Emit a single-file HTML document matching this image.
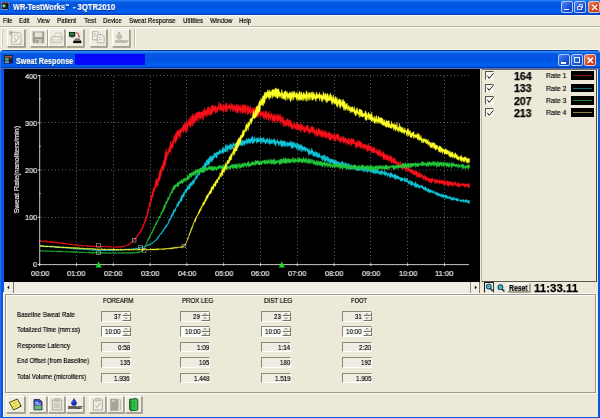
<!DOCTYPE html>
<html><head><meta charset="utf-8"><title>WR-TestWorks</title><style>
html,body{margin:0;padding:0;overflow:hidden}
body{width:600px;height:418px;overflow:hidden;position:relative;background:#ece9d8;font-family:"Liberation Sans",sans-serif;}
div,span,svg{position:absolute;box-sizing:border-box}
.t{white-space:nowrap;line-height:12px;height:12px;transform-origin:0 50%;will-change:transform;-webkit-text-stroke:0.18px currentColor;}
.titlebar{left:0;top:0;width:600px;height:15px;background:linear-gradient(#2c8aff 0%,#1470f0 8%,#0458e2 18%,#0055e0 50%,#0060f2 70%,#0058e8 86%,#0040c0 95%,#1646ac 100%);}
.btn{background:#efede1;border:1px solid;border-color:#fff #a4a191 #a4a191 #fff;box-shadow:0.7px 0.7px 0 #8f8d7e;}
.sunk{border:1px solid;border-color:#8a8878 #fff #fff #8a8878;background:#ece9d8}
.wb{border:0.9px solid #b4c8f6;border-radius:2px;background:linear-gradient(135deg,#4d8af0,#1c52d4 60%,#1746c0);}
.wbx{border:0.9px solid #e4c4bc;border-radius:2px;background:linear-gradient(135deg,#ea8a66,#d8431c 55%,#b83412);}
</style></head>
<body>
<div class="titlebar"></div>
<svg width="9" height="9" viewBox="0 0 9 9" style="left:1.1px;top:2.2px"><rect x="0.3" y="0.3" width="7.6" height="7" fill="#17120e" stroke="#a4b8ea" stroke-width="0.6"/><rect x="0.9" y="0.8" width="6.4" height="1.2" fill="#4e1a10"/><ellipse cx="3" cy="4" rx="1.8" ry="1.7" fill="#56b070"/><circle cx="2.8" cy="3.4" r="0.7" fill="#dcf4dc"/><path d="M5.8,5.2 L8.2,8" stroke="#0a1c9a" stroke-width="1"/></svg>
<div class="wb" style="left:561px;top:0.5px;width:12px;height:12px"><div style="left:2.4px;top:7.4px;width:4.4px;height:1.5px;background:#fff"></div></div>
<div class="wb" style="left:574px;top:0.5px;width:12px;height:12px"><div style="left:4px;top:2.4px;width:4.4px;height:3.8px;border:0.8px solid #c6d6fa;border-top-width:1.3px"></div><div style="left:2.4px;top:4.4px;width:4.4px;height:3.8px;border:0.8px solid #c6d6fa;border-top-width:1.3px;background:#2a5cd6"></div></div>
<div class="wbx" style="left:587.8px;top:0.5px;width:12.2px;height:12px"><svg width="12" height="11" style="left:0;top:0"><path d="M3,2.6 L8.4,8 M8.4,2.6 L3,8" stroke="#fff" stroke-width="1.3"/></svg></div>
<div style="left:0.0px;top:15.0px;width:600.0px;height:1.0px;background:#fbfaf6"></div>
<div style="left:0.0px;top:26.0px;width:600.0px;height:0.8px;background:#b5b2a3"></div>
<div style="left:0.0px;top:26.8px;width:600.0px;height:0.8px;background:#fdfdfb"></div>
<div style="left:0.8px;top:29.4px;width:1.6px;height:17.6px;border-left:0.8px solid #fff;border-right:0.7px solid #cbc8b8;"></div>
<div class="btn" style="left:7.0px;top:29.4px;width:17.5px;height:17.5px"><svg width="18" height="18" viewBox="0 0 18 18" style="left:-1px;top:-1px"><path d="M4.6,3.4 H12.4 L14,5 V15.2 H4.6 Z" fill="#f3f1e8" stroke="#a9a697" stroke-width="0.8"/><path d="M3.6,1.4 V6.4 M1.4,3.9 H6 M2,2.2 L5.4,5.6 M5.4,2.2 L2,5.6" stroke="#a9a697" stroke-width="0.75"/><path d="M7,8 q0.6,-3.4 3.6,-2.6 q1.6,1 0.4,3.4 M7.4,8.6 q1.4,2.6 2,4 M12.6,7.6 L8,13.6 M6.6,12.6 h2" stroke="#a9a697" stroke-width="0.7" fill="none"/></svg></div>
<div class="btn" style="left:30.3px;top:29.4px;width:17.3px;height:17.5px"><svg width="18" height="18" viewBox="0 0 18 18" style="left:-1px;top:-1px"><path d="M2.6,2.6 H14.2 V14.2 H3.8 L2.6,13 Z" fill="#a19e90"/><rect x="4.8" y="3.4" width="7.4" height="4.6" fill="#e6e3d6"/><rect x="5.6" y="10.2" width="6" height="4" fill="#cfccbf"/><rect x="6.4" y="11" width="1.8" height="2.6" fill="#8f8c7e"/></svg></div>
<div class="btn" style="left:48.0px;top:29.4px;width:17.2px;height:17.5px"><svg width="18" height="18" viewBox="0 0 18 18" style="left:-1px;top:-1px"><path d="M5.4,8 L7.6,4 H13.4 L12.4,8" fill="#f3f1e8" stroke="#b9b6a7" stroke-width="0.7"/><path d="M3,8.4 L4.6,7.6 H14.6 V11.6 L13,13.8 H3 Z" fill="#e4e1d4" stroke="#b9b6a7" stroke-width="0.8"/><path d="M3.2,10.6 H12.8 L14.4,8.6" stroke="#b9b6a7" stroke-width="0.7" fill="none"/><path d="M4.6,10 H11.6" stroke="#fbfaf6" stroke-width="0.9"/></svg></div>
<div class="btn" style="left:66.3px;top:29.4px;width:17.7px;height:17.5px"><svg width="18" height="18" viewBox="0 0 18 18" style="left:-1px;top:-1px"><rect x="3" y="3" width="6.2" height="4.6" fill="#0c140e"/><rect x="3.8" y="3.7" width="4.4" height="2.6" fill="#2b9a4c"/><path d="M4.4,5.6 l1.4,-1.2 l1,0.8 l1.2,-1" stroke="#0c3a1a" stroke-width="0.5" fill="none"/><rect x="4.8" y="7.6" width="2.8" height="0.9" fill="#222"/><path d="M9.6,3.6 q3.4,0.2 3.4,4.2" stroke="#c0564e" stroke-width="1.2" fill="none"/><path d="M11.6,7.2 L13,9 L14.2,7 Z" fill="#c0564e"/><path d="M7.4,12 L9.4,9.4 H13.4 L15.2,12 Z" fill="#55584f"/><path d="M9,11 H13.6" stroke="#cfd6cf" stroke-width="0.6"/><rect x="7.2" y="12" width="8.2" height="2.1" fill="#0a0a0a"/></svg></div>
<div class="btn" style="left:89.6px;top:29.4px;width:17.6px;height:17.5px"><svg width="18" height="18" viewBox="0 0 18 18" style="left:-1px;top:-1px"><path d="M2.6,2.6 H7 L9,4.4 V10.8 H2.6 Z" fill="#f1efe6" stroke="#a9a697" stroke-width="0.8"/><path d="M7.4,5.6 H12 L14.2,7.6 V13.8 H7.4 Z" fill="#f1efe6" stroke="#a9a697" stroke-width="0.8"/><path d="M4,5 H6 M4,7 H6.4 M9,8.6 H11 M9,10.6 H12" stroke="#a9a697" stroke-width="0.6"/></svg></div>
<div class="btn" style="left:112.4px;top:29.4px;width:17.6px;height:17.5px"><svg width="18" height="18" viewBox="0 0 18 18" style="left:-1px;top:-1px"><path d="M7.2,3 C7.6,5 9.6,6.2 9.6,7.8 A2.4,2.4 0 0 1 4.8,7.8 C4.8,6.2 6.8,5 7.2,3 Z" fill="#c9c6b8" stroke="#a9a697" stroke-width="0.8"/></svg></div>
<div style="left:134.0px;top:28.6px;width:1.4px;height:19.8px;border-left:0.7px solid #bdbaa9;border-right:0.7px solid #fff;"></div>
<div style="left:0.0px;top:49.0px;width:600.0px;height:1.0px;background:#f6f5ee"></div>
<div style="left:0;top:50px;width:600px;height:368px;background:#0a56e4;border-radius:4px 4px 0 0;"></div>
<div style="left:0;top:50px;width:600px;height:19px;border-radius:4px 4px 0 0;background:linear-gradient(#0c3c90 0%,#0c3c90 3.5%,#2a86f8 6%,#2a80f4 12%,#0458e2 19%,#0055e0 58%,#0060f0 76%,#0058e6 88%,#0036a8 93%,#0036a8 96.5%,#8098c8 98%,#8098c8 100%);"></div>
<div style="left:0.0px;top:54.0px;width:0.8px;height:364.0px;background:#2c6fe8"></div>
<div style="left:74.5px;top:53.9px;width:70.5px;height:10.8px;background:#0606f8"></div>
<svg width="10" height="9" viewBox="0 0 10 9" style="left:4px;top:54.7px"><rect x="0" y="0" width="8.8" height="8.4" fill="#101a34"/><rect x="0.6" y="1.1" width="7.6" height="1.5" fill="#a85a5a"/><ellipse cx="2.9" cy="4.3" rx="2.1" ry="1.4" fill="#3cc068"/><rect x="5.8" y="2.6" width="2.2" height="1.8" fill="#7a2a18"/><rect x="0.8" y="6.3" width="4.2" height="1.4" fill="#b4b4b4"/><path d="M5.8,4.8 L9,8.6" stroke="#0a1a96" stroke-width="1"/></svg>
<div class="wb" style="left:557.5px;top:54px;width:12px;height:12.3px"><div style="left:2.6px;top:7px;width:4.5px;height:1.6px;background:#fff"></div></div>
<div class="wb" style="left:570.8px;top:54px;width:12px;height:12.3px"><div style="left:2.2px;top:2.4px;width:6.2px;height:5.6px;border:1px solid #e8eefc;border-top-width:1.6px"></div></div>
<div class="wbx" style="left:584px;top:54px;width:12.3px;height:12.3px"><svg width="12" height="12" style="left:0;top:0"><path d="M2.6,2.6 L8,8 M8,2.6 L2.6,8" stroke="#fff" stroke-width="1.5"/></svg></div>
<div style="left:3.6px;top:68.7px;width:594.0px;height:348.1px;background:#ece9d8"></div>
<div style="left:3.0px;top:292.0px;width:1.2px;height:124.8px;background:#fbfaf5"></div>
<div style="left:3.8px;top:69.0px;width:476.7px;height:212.6px;background:#000"></div>
<div style="left:480.5px;top:68.7px;width:1.7px;height:213.3px;background:#b9b7a8"></div>
<div style="left:482.2px;top:68.9px;width:114.8px;height:213.0px;border-top:0.8px solid #6e6c60;border-right:0.9px solid #4c4a42;border-bottom:0.9px solid #5c5a50;"></div>
<svg width="600" height="418" viewBox="0 0 600 418" style="left:0;top:0">
<line x1="41" y1="75.50" x2="469" y2="75.50" stroke="#a8a8a8" stroke-width="0.75" stroke-dasharray="0.8 2.7"/>
<line x1="41" y1="122.50" x2="469" y2="122.50" stroke="#a8a8a8" stroke-width="0.75" stroke-dasharray="0.8 2.7"/>
<line x1="41" y1="170.00" x2="469" y2="170.00" stroke="#a8a8a8" stroke-width="0.75" stroke-dasharray="0.8 2.7"/>
<line x1="41" y1="217.50" x2="469" y2="217.50" stroke="#a8a8a8" stroke-width="0.75" stroke-dasharray="0.8 2.7"/>
<line x1="76.50" y1="76.5" x2="76.50" y2="264" stroke="#a8a8a8" stroke-width="0.75" stroke-dasharray="0.8 2.7"/>
<line x1="113.50" y1="76.5" x2="113.50" y2="264" stroke="#a8a8a8" stroke-width="0.75" stroke-dasharray="0.8 2.7"/>
<line x1="150.50" y1="76.5" x2="150.50" y2="264" stroke="#a8a8a8" stroke-width="0.75" stroke-dasharray="0.8 2.7"/>
<line x1="186.50" y1="76.5" x2="186.50" y2="264" stroke="#a8a8a8" stroke-width="0.75" stroke-dasharray="0.8 2.7"/>
<line x1="223.50" y1="76.5" x2="223.50" y2="264" stroke="#a8a8a8" stroke-width="0.75" stroke-dasharray="0.8 2.7"/>
<line x1="260.50" y1="76.5" x2="260.50" y2="264" stroke="#a8a8a8" stroke-width="0.75" stroke-dasharray="0.8 2.7"/>
<line x1="297.50" y1="76.5" x2="297.50" y2="264" stroke="#a8a8a8" stroke-width="0.75" stroke-dasharray="0.8 2.7"/>
<line x1="334.50" y1="76.5" x2="334.50" y2="264" stroke="#a8a8a8" stroke-width="0.75" stroke-dasharray="0.8 2.7"/>
<line x1="370.50" y1="76.5" x2="370.50" y2="264" stroke="#a8a8a8" stroke-width="0.75" stroke-dasharray="0.8 2.7"/>
<line x1="407.50" y1="76.5" x2="407.50" y2="264" stroke="#a8a8a8" stroke-width="0.75" stroke-dasharray="0.8 2.7"/>
<line x1="444.50" y1="76.5" x2="444.50" y2="264" stroke="#a8a8a8" stroke-width="0.75" stroke-dasharray="0.8 2.7"/>
<path d="M39.7,75 V265 M39.2,264.6 H469" stroke="#dcdcdc" stroke-width="0.9" fill="none"/>
<path d="M38,75.50 H40.2 M38,122.75 H40.2 M38,170.00 H40.2 M38,217.25 H40.2 M38,264.50 H40.2 M39,99.10 H40.6 M39,146.35 H40.6 M39,193.60 H40.6 M39,240.85 H40.6 M39.70,263.3 V266 M76.50,263.3 V266 M113.30,263.3 V266 M150.10,263.3 V266 M186.90,263.3 V266 M223.70,263.3 V266 M260.50,263.3 V266 M297.30,263.3 V266 M334.10,263.3 V266 M370.90,263.3 V266 M407.70,263.3 V266 M444.50,263.3 V266" stroke="#e4e4e4" stroke-width="0.9" fill="none"/>
<path d="M40.0,240.3 40.6,240.3 41.2,240.9 41.8,240.7 42.4,240.9 43.0,241.0 43.6,241.0 44.2,240.8 44.8,240.8 45.4,240.9 46.0,241.1 46.6,240.8 47.2,241.4 47.8,240.9 48.4,241.6 49.0,241.2 49.6,241.5 50.2,241.4 50.8,241.8 51.4,241.8 52.0,241.5 52.6,241.4 53.2,241.9 53.8,241.8 54.4,241.7 55.0,241.7 55.6,242.4 56.2,242.4 56.8,242.3 57.4,242.0 58.0,242.6 58.6,242.5 59.2,242.2 59.8,242.5 60.4,242.5 61.0,242.8 61.6,242.7 62.2,242.6 62.8,243.3 63.4,242.8 64.0,242.8 64.6,243.0 65.2,243.4 65.8,243.1 66.4,243.7 67.0,243.5 67.6,243.3 68.2,243.8 68.8,243.7 69.4,244.0 70.0,244.1 70.6,243.8 71.2,244.1 71.8,244.0 72.4,244.2 73.0,244.5 73.6,244.3 74.2,244.6 74.8,244.4 75.4,244.4 76.0,244.7 76.6,244.8 77.2,244.5 77.8,244.9 78.4,245.2 79.0,244.8 79.6,245.0 80.2,245.1 80.8,244.9 81.4,245.2 82.0,245.0 82.6,245.5 83.2,245.6 83.8,245.2 84.4,245.5 85.0,245.7 85.6,245.2 86.2,245.6 86.8,245.2 87.4,245.5 88.0,245.4 88.6,245.6 89.2,245.5 89.8,245.8 90.4,245.8 91.0,245.4 91.6,245.9 92.2,245.6 92.8,245.8 93.4,245.9 94.0,246.2 94.6,245.8 95.2,246.1 95.8,246.1 96.4,246.2 97.0,246.3 97.6,246.0 98.2,246.2 98.8,246.6 99.4,246.2 100.0,246.4 100.6,246.3 101.2,246.1 101.8,246.4 102.4,246.1 103.0,246.2 103.6,246.7 104.2,246.1 104.8,246.3 105.4,246.1 106.0,246.6 106.6,246.6 107.2,246.0 107.8,246.4 108.4,246.8 109.0,246.3 109.6,246.4 110.2,246.2 110.8,246.4 111.4,246.8 112.0,246.7 112.6,246.9 113.2,246.9 113.8,246.8 114.4,246.4 115.0,246.6 115.6,246.6 116.2,246.4 116.8,246.8 117.4,246.7 118.0,246.5 118.6,246.3 119.2,246.3 119.8,246.8 120.4,246.3 121.0,246.7 121.6,246.2 122.2,246.4 122.8,246.0 123.4,246.0 124.0,245.9 124.6,246.0 125.2,245.9 125.8,245.6 126.4,245.4 127.0,245.1 127.6,244.8 128.2,244.1 128.8,243.9 129.4,244.0 130.0,243.5 130.6,242.3 131.2,241.9 131.8,241.7 132.4,241.3 133.0,240.4 133.6,240.3 134.2,239.3 134.8,238.1 135.4,237.4 136.0,237.4 136.6,236.2 137.2,235.1 137.8,233.9 138.4,234.0 139.0,232.9 139.6,232.4 140.2,230.9 140.8,229.8 141.4,228.8 142.0,228.1 142.6,224.8 143.2,224.8 143.8,223.3 144.4,221.4 145.0,218.9 145.6,216.9 146.2,216.1 146.8,214.6 147.4,211.2 148.0,207.7 148.6,207.0 149.2,202.1 149.8,202.9 150.4,199.7 151.0,195.1 151.6,195.9 152.2,191.5 152.8,190.8 153.4,187.2 154.0,188.6 154.6,186.3 155.2,183.2 155.8,179.8 156.4,179.3 157.0,177.6 157.6,180.6 158.2,178.1 158.8,174.6 159.4,171.3 160.0,169.6 160.6,170.0 161.2,166.2 161.8,165.5 162.4,165.6 163.0,163.1 163.6,160.6 164.2,159.1 164.8,154.8 165.4,150.7 166.0,154.8 166.6,148.2 167.2,153.0 167.8,151.9 168.4,150.4 169.0,146.8 169.6,148.6 170.2,141.7 170.8,141.2 171.4,145.0 172.0,142.6 172.6,140.7 173.2,140.9 173.8,135.8 174.4,137.7 175.0,133.4 175.6,134.7 176.2,132.3 176.8,131.7 177.4,130.5 178.0,130.2 178.6,131.0 179.2,128.8 179.8,131.0 180.4,129.1 181.0,127.8 181.6,130.4 182.2,126.4 182.8,126.7 183.4,123.9 184.0,126.0 184.6,122.0 185.2,123.2 185.8,124.8 186.4,119.5 187.0,121.2 187.6,123.8 188.2,121.3 188.8,119.4 189.4,117.6 190.0,122.1 190.6,116.3 191.2,119.0 191.8,115.3 192.4,116.1 193.0,113.1 193.6,116.1 194.2,114.8 194.8,116.8 195.4,113.6 196.0,113.5 196.6,112.6 197.2,112.7 197.8,112.3 198.4,111.3 199.0,112.3 199.6,111.7 200.2,112.0 200.8,112.5 201.4,112.0 202.0,111.8 202.6,111.9 203.2,110.0 203.8,110.7 204.4,107.7 205.0,108.9 205.6,111.2 206.2,109.8 206.8,110.0 207.4,107.5 208.0,106.9 208.6,106.6 209.2,107.6 209.8,109.4 210.4,109.2 211.0,106.0 211.6,105.8 212.2,105.9 212.8,105.0 213.4,105.7 214.0,106.7 214.6,105.2 215.2,106.0 215.8,106.3 216.4,106.8 217.0,108.0 217.6,106.3 218.2,106.7 218.8,101.9 219.4,107.0 220.0,102.4 220.6,103.6 221.2,104.0 221.8,104.9 222.4,106.7 223.0,105.2 223.6,104.1 224.2,106.2 224.8,104.5 225.4,105.7 226.0,102.8 226.6,102.8 227.2,105.1 227.8,106.2 228.4,105.9 229.0,104.3 229.6,103.4 230.2,105.8 230.8,105.6 231.4,102.8 232.0,104.9 232.6,104.0 233.2,105.9 233.8,106.6 234.4,104.7 235.0,105.0 235.6,106.7 236.2,103.9 236.8,105.0 237.4,104.6 238.0,107.1 238.6,104.3 239.2,106.9 239.8,105.6 240.4,104.4 241.0,108.2 241.6,106.8 242.2,104.3 242.8,104.5 243.4,106.1 244.0,104.4 244.6,104.4 245.2,105.1 245.8,105.1 246.4,109.0 247.0,106.4 247.6,105.3 248.2,106.3 248.8,106.2 249.4,110.0 250.0,105.6 250.6,105.8 251.2,109.4 251.8,109.6 252.4,107.9 253.0,109.2 253.6,107.4 254.2,109.3 254.8,107.6 255.4,107.0 256.0,110.4 256.6,111.4 257.2,107.9 257.8,109.4 258.4,107.8 259.0,109.7 259.6,108.0 260.2,110.4 260.8,110.7 261.4,111.4 262.0,111.9 262.6,112.0 263.2,113.1 263.8,110.5 264.4,114.1 265.0,112.6 265.6,110.5 266.2,111.4 266.8,111.6 267.4,114.2 268.0,113.1 268.6,112.6 269.2,110.9 269.8,114.8 270.4,114.7 271.0,114.8 271.6,112.7 272.2,114.3 272.8,116.2 273.4,114.4 274.0,115.9 274.6,113.3 275.2,115.9 275.8,117.3 276.4,114.8 277.0,113.5 277.6,116.1 278.2,114.5 278.8,115.8 279.4,115.8 280.0,113.9 280.6,115.0 281.2,119.5 281.8,116.3 282.4,118.1 283.0,116.1 283.6,120.2 284.2,120.3 284.8,121.5 285.4,120.1 286.0,121.8 286.6,119.5 287.2,119.0 287.8,118.2 288.4,119.6 289.0,121.7 289.6,119.6 290.2,121.1 290.8,120.2 291.4,121.3 292.0,123.7 292.6,124.2 293.2,124.7 293.8,124.7 294.4,121.8 295.0,124.9 295.6,125.5 296.2,122.4 296.8,124.2 297.4,122.0 298.0,124.3 298.6,124.5 299.2,124.6 299.8,124.8 300.4,123.6 301.0,125.5 301.6,123.5 302.2,127.5 302.8,124.5 303.4,127.5 304.0,125.5 304.6,128.4 305.2,126.3 305.8,128.8 306.4,124.9 307.0,125.3 307.6,125.5 308.2,125.6 308.8,129.1 309.4,128.7 310.0,129.2 310.6,127.5 311.2,126.5 311.8,126.3 312.4,126.3 313.0,127.6 313.6,127.1 314.2,128.4 314.8,130.1 315.4,130.6 316.0,131.0 316.6,128.2 317.2,131.1 317.8,130.5 318.4,128.6 319.0,130.0 319.6,128.2 320.2,131.4 320.8,130.4 321.4,131.5 322.0,129.2 322.6,131.7 323.2,131.6 323.8,131.4 324.4,129.8 325.0,133.8 325.6,131.1 326.2,130.6 326.8,134.3 327.4,132.5 328.0,133.5 328.6,131.4 329.2,132.9 329.8,132.5 330.4,133.7 331.0,133.1 331.6,134.1 332.2,135.7 332.8,133.9 333.4,135.1 334.0,134.5 334.6,133.0 335.2,135.2 335.8,136.1 336.4,134.3 337.0,133.7 337.6,133.9 338.2,134.4 338.8,134.3 339.4,137.3 340.0,138.1 340.6,137.7 341.2,136.2 341.8,138.3 342.4,136.7 343.0,136.5 343.6,136.2 344.2,138.9 344.8,137.1 345.4,139.1 346.0,137.9 346.6,139.0 347.2,140.3 347.8,139.8 348.4,138.3 349.0,137.8 349.6,139.2 350.2,140.7 350.8,139.4 351.4,137.9 352.0,138.7 352.6,139.8 353.2,138.5 353.8,138.9 354.4,140.3 355.0,142.7 355.6,142.6 356.2,142.5 356.8,141.6 357.4,140.7 358.0,139.9 358.6,143.0 359.2,140.3 359.8,141.3 360.4,141.3 361.0,142.3 361.6,142.3 362.2,143.3 362.8,145.4 363.4,144.3 364.0,143.9 364.6,143.2 365.2,144.5 365.8,144.7 366.4,144.8 367.0,146.9 367.6,144.3 368.2,146.2 368.8,142.9 369.4,145.9 370.0,146.8 370.6,146.3 371.2,145.7 371.8,147.1 372.4,148.8 373.0,148.3 373.6,146.4 374.2,147.6 374.8,147.5 375.4,150.4 376.0,151.2 376.6,149.5 377.2,148.7 377.8,152.2 378.4,149.9 379.0,149.4 379.6,151.5 380.2,149.2 380.8,151.4 381.4,154.2 382.0,152.6 382.6,151.5 383.2,151.5 383.8,153.0 384.4,153.2 385.0,153.9 385.6,155.3 386.2,154.6 386.8,154.5 387.4,156.0 388.0,154.4 388.6,157.2 389.2,155.4 389.8,157.4 390.4,154.9 391.0,157.5 391.6,155.8 392.2,158.4 392.8,159.2 393.4,157.4 394.0,159.5 394.6,158.2 395.2,158.5 395.8,160.8 396.4,161.1 397.0,161.5 397.6,162.1 398.2,161.6 398.8,163.3 399.4,163.4 400.0,161.7 400.6,161.6 401.2,164.6 401.8,164.4 402.4,164.9 403.0,162.6 403.6,163.9 404.2,164.8 404.8,166.1 405.4,163.5 406.0,166.4 406.6,165.1 407.2,166.2 407.8,167.4 408.4,168.9 409.0,166.4 409.6,168.8 410.2,169.6 410.8,169.2 411.4,169.6 412.0,170.7 412.6,169.2 413.2,171.2 413.8,170.1 414.4,170.0 415.0,172.0 415.6,171.1 416.2,170.9 416.8,171.2 417.4,172.0 418.0,173.3 418.6,172.2 419.2,171.9 419.8,173.8 420.4,173.0 421.0,175.5 421.6,173.4 422.2,175.6 422.8,175.3 423.4,175.8 424.0,176.7 424.6,174.6 425.2,176.4 425.8,176.2 426.4,176.6 427.0,177.9 427.6,178.0 428.2,178.6 428.8,177.6 429.4,178.6 430.0,178.5 430.6,179.4 431.2,177.8 431.8,179.8 432.4,177.6 433.0,179.9 433.6,178.9 434.2,180.5 434.8,178.6 435.4,180.1 436.0,179.6 436.6,179.1 437.2,180.8 437.8,179.9 438.4,180.9 439.0,179.6 439.6,179.8 440.2,181.3 440.8,179.7 441.4,181.1 442.0,179.9 442.6,180.8 443.2,181.0 443.8,180.5 444.4,180.7 445.0,180.1 445.6,181.4 446.2,182.7 446.8,180.5 447.4,180.8 448.0,181.2 448.6,181.8 449.2,181.4 449.8,181.3 450.4,182.4 451.0,181.5 451.6,181.7 452.2,182.1 452.8,182.7 453.4,182.1 454.0,183.8 454.6,182.0 455.2,181.4 455.8,182.6 456.4,183.8 457.0,183.7 457.6,183.6 458.2,182.2 458.8,183.1 459.4,183.8 460.0,184.2 460.6,183.9 461.2,183.2 461.8,184.0 462.4,183.7 463.0,183.8 463.6,182.9 464.2,183.9 464.8,184.2 465.4,183.4 466.0,184.5 466.6,184.0 467.2,184.4 467.8,183.7 468.4,183.2 469.0,184.2 469.6,183.5 L469.6,187.7 469.0,187.7 468.4,187.5 467.8,185.9 467.2,187.1 466.6,186.7 466.0,186.1 465.4,186.6 464.8,187.7 464.2,186.2 463.6,186.0 463.0,185.4 462.4,185.9 461.8,185.7 461.2,185.2 460.6,185.1 460.0,187.3 459.4,187.2 458.8,186.9 458.2,185.2 457.6,187.0 457.0,186.6 456.4,185.6 455.8,185.8 455.2,184.9 454.6,184.6 454.0,185.1 453.4,186.1 452.8,186.5 452.2,185.5 451.6,185.1 451.0,185.6 450.4,184.7 449.8,185.0 449.2,185.8 448.6,186.7 448.0,184.8 447.4,185.8 446.8,185.7 446.2,183.9 445.6,183.9 445.0,185.0 444.4,184.6 443.8,184.7 443.2,184.9 442.6,182.7 442.0,184.0 441.4,183.6 440.8,182.4 440.2,184.1 439.6,184.5 439.0,182.7 438.4,182.8 437.8,182.9 437.2,182.9 436.6,183.3 436.0,183.6 435.4,181.5 434.8,184.2 434.2,181.1 433.6,181.1 433.0,181.0 432.4,181.0 431.8,183.2 431.2,183.0 430.6,182.7 430.0,182.4 429.4,181.5 428.8,181.8 428.2,182.0 427.6,179.9 427.0,179.0 426.4,181.3 425.8,180.2 425.2,180.4 424.6,179.4 424.0,177.7 423.4,180.2 422.8,178.6 422.2,177.6 421.6,176.5 421.0,177.8 420.4,178.3 419.8,175.8 419.2,177.7 418.6,176.4 418.0,177.8 417.4,177.0 416.8,177.1 416.2,175.8 415.6,174.7 415.0,175.1 414.4,175.2 413.8,174.9 413.2,174.6 412.6,173.3 412.0,173.5 411.4,173.3 410.8,172.3 410.2,172.7 409.6,171.9 409.0,170.6 408.4,171.6 407.8,170.3 407.2,169.6 406.6,171.2 406.0,169.4 405.4,171.6 404.8,168.0 404.2,168.3 403.6,167.6 403.0,169.7 402.4,169.6 401.8,168.7 401.2,167.5 400.6,167.9 400.0,167.4 399.4,166.9 398.8,167.4 398.2,164.5 397.6,164.5 397.0,164.6 396.4,163.0 395.8,163.7 395.2,164.4 394.6,163.0 394.0,163.6 393.4,163.8 392.8,162.0 392.2,161.7 391.6,163.5 391.0,161.9 390.4,160.8 389.8,161.1 389.2,159.2 388.6,161.4 388.0,160.4 387.4,159.7 386.8,160.7 386.2,159.4 385.6,160.0 385.0,158.0 384.4,159.9 383.8,159.9 383.2,159.0 382.6,157.2 382.0,155.9 381.4,155.8 380.8,156.5 380.2,156.9 379.6,153.9 379.0,156.2 378.4,155.7 377.8,155.8 377.2,153.8 376.6,153.7 376.0,152.9 375.4,152.1 374.8,152.8 374.2,152.7 373.6,153.0 373.0,151.3 372.4,153.1 371.8,151.5 371.2,152.9 370.6,149.3 370.0,150.1 369.4,151.1 368.8,150.7 368.2,149.9 367.6,150.2 367.0,151.9 366.4,150.7 365.8,147.7 365.2,148.4 364.6,149.6 364.0,147.7 363.4,147.8 362.8,149.6 362.2,146.9 361.6,147.6 361.0,147.0 360.4,148.9 359.8,146.1 359.2,146.4 358.6,146.5 358.0,147.6 357.4,146.0 356.8,147.2 356.2,148.3 355.6,148.1 355.0,144.3 354.4,143.9 353.8,144.0 353.2,143.0 352.6,144.0 352.0,144.9 351.4,146.0 350.8,143.0 350.2,142.7 349.6,145.8 349.0,143.2 348.4,144.3 347.8,142.2 347.2,144.5 346.6,141.2 346.0,145.6 345.4,141.8 344.8,142.2 344.2,142.3 343.6,143.3 343.0,142.3 342.4,141.7 341.8,141.3 341.2,140.1 340.6,143.1 340.0,143.1 339.4,140.6 338.8,141.3 338.2,139.1 337.6,141.0 337.0,138.5 336.4,138.7 335.8,140.0 335.2,141.8 334.6,139.1 334.0,141.4 333.4,138.5 332.8,138.7 332.2,137.6 331.6,139.0 331.0,140.4 330.4,138.9 329.8,140.7 329.2,139.4 328.6,138.4 328.0,136.2 327.4,137.3 326.8,138.0 326.2,138.6 325.6,136.3 325.0,138.3 324.4,134.8 323.8,138.1 323.2,137.0 322.6,135.3 322.0,137.6 321.4,137.3 320.8,134.7 320.2,137.0 319.6,135.3 319.0,133.8 318.4,135.2 317.8,136.6 317.2,136.1 316.6,134.1 316.0,137.3 315.4,133.4 314.8,134.9 314.2,134.8 313.6,131.8 313.0,132.3 312.4,133.3 311.8,132.2 311.2,131.4 310.6,133.0 310.0,133.6 309.4,133.1 308.8,133.9 308.2,131.1 307.6,131.7 307.0,130.4 306.4,130.2 305.8,131.5 305.2,132.7 304.6,131.9 304.0,132.6 303.4,130.2 302.8,130.4 302.2,129.2 301.6,129.3 301.0,132.5 300.4,131.4 299.8,131.1 299.2,128.2 298.6,130.1 298.0,130.2 297.4,130.0 296.8,129.9 296.2,128.6 295.6,129.4 295.0,128.2 294.4,128.2 293.8,126.1 293.2,129.0 292.6,129.1 292.0,128.6 291.4,129.4 290.8,125.1 290.2,127.7 289.6,127.0 289.0,125.2 288.4,126.9 287.8,125.1 287.2,124.7 286.6,126.6 286.0,125.2 285.4,125.2 284.8,127.0 284.2,123.9 283.6,125.1 283.0,127.0 282.4,122.6 281.8,122.7 281.2,120.7 280.6,124.4 280.0,120.9 279.4,119.6 278.8,122.0 278.2,119.5 277.6,122.4 277.0,121.9 276.4,119.0 275.8,119.7 275.2,122.7 274.6,122.5 274.0,120.6 273.4,121.6 272.8,120.2 272.2,121.6 271.6,118.6 271.0,116.9 270.4,121.6 269.8,117.5 269.2,118.9 268.6,120.7 268.0,119.6 267.4,116.2 266.8,120.0 266.2,118.4 265.6,118.2 265.0,116.9 264.4,119.7 263.8,117.8 263.2,118.8 262.6,115.3 262.0,115.0 261.4,115.4 260.8,116.9 260.2,115.0 259.6,114.3 259.0,116.3 258.4,117.7 257.8,114.6 257.2,117.2 256.6,115.9 256.0,115.3 255.4,116.8 254.8,114.8 254.2,116.9 253.6,116.1 253.0,112.9 252.4,116.1 251.8,112.0 251.2,113.5 250.6,115.6 250.0,112.6 249.4,112.3 248.8,113.5 248.2,113.8 247.6,115.2 247.0,111.1 246.4,110.6 245.8,114.1 245.2,112.9 244.6,111.1 244.0,113.2 243.4,112.7 242.8,112.8 242.2,113.5 241.6,109.5 241.0,112.3 240.4,113.5 239.8,110.0 239.2,110.9 238.6,113.2 238.0,110.3 237.4,113.3 236.8,111.3 236.2,112.8 235.6,112.8 235.0,109.3 234.4,111.2 233.8,108.2 233.2,111.9 232.6,111.4 232.0,108.3 231.4,109.8 230.8,107.9 230.2,111.4 229.6,109.5 229.0,107.9 228.4,108.7 227.8,108.0 227.2,112.2 226.6,111.7 226.0,111.0 225.4,112.1 224.8,108.1 224.2,110.2 223.6,112.2 223.0,110.3 222.4,111.2 221.8,110.8 221.2,111.3 220.6,108.8 220.0,111.0 219.4,109.6 218.8,109.4 218.2,109.1 217.6,111.7 217.0,113.0 216.4,111.5 215.8,113.0 215.2,113.3 214.6,110.2 214.0,111.8 213.4,110.6 212.8,112.8 212.2,113.1 211.6,114.8 211.0,114.9 210.4,115.8 209.8,113.2 209.2,115.6 208.6,113.6 208.0,115.5 207.4,113.9 206.8,117.5 206.2,115.6 205.6,114.8 205.0,116.4 204.4,115.1 203.8,118.1 203.2,120.8 202.6,119.1 202.0,116.0 201.4,118.3 200.8,119.2 200.2,117.9 199.6,117.4 199.0,121.2 198.4,117.4 197.8,118.1 197.2,122.1 196.6,119.3 196.0,121.4 195.4,120.6 194.8,122.6 194.2,121.1 193.6,124.9 193.0,123.1 192.4,126.8 191.8,124.5 191.2,124.7 190.6,127.7 190.0,126.8 189.4,126.1 188.8,125.2 188.2,124.7 187.6,130.2 187.0,131.6 186.4,130.9 185.8,132.5 185.2,130.7 184.6,130.0 184.0,131.1 183.4,133.1 182.8,130.8 182.2,130.9 181.6,132.3 181.0,132.6 180.4,138.6 179.8,135.8 179.2,136.7 178.6,135.2 178.0,137.8 177.4,138.3 176.8,141.7 176.2,139.3 175.6,143.5 175.0,142.9 174.4,141.2 173.8,142.6 173.2,147.5 172.6,147.0 172.0,149.2 171.4,146.9 170.8,153.4 170.2,151.7 169.6,151.6 169.0,152.0 168.4,155.0 167.8,154.3 167.2,157.1 166.6,159.6 166.0,162.1 165.4,166.3 164.8,165.2 164.2,168.5 163.6,170.2 163.0,168.2 162.4,171.4 161.8,171.7 161.2,175.5 160.6,176.8 160.0,179.8 159.4,180.8 158.8,180.9 158.2,184.4 157.6,186.3 157.0,187.3 156.4,185.3 155.8,188.6 155.2,187.6 154.6,191.4 154.0,190.9 153.4,196.8 152.8,196.0 152.2,198.3 151.6,202.1 151.0,199.9 150.4,206.0 149.8,205.1 149.2,207.9 148.6,212.6 148.0,213.4 147.4,216.4 146.8,216.9 146.2,221.0 145.6,221.2 145.0,222.7 144.4,224.6 143.8,225.6 143.2,227.6 142.6,229.2 142.0,229.4 141.4,231.1 140.8,232.5 140.2,233.2 139.6,233.3 139.0,234.8 138.4,234.8 137.8,236.2 137.2,237.1 136.6,238.1 136.0,238.0 135.4,239.0 134.8,239.8 134.2,240.8 133.6,240.8 133.0,241.7 132.4,242.0 131.8,242.4 131.2,243.7 130.6,243.3 130.0,244.5 129.4,244.6 128.8,245.1 128.2,245.4 127.6,245.5 127.0,245.6 126.4,246.0 125.8,246.2 125.2,246.5 124.6,246.3 124.0,247.1 123.4,247.2 122.8,247.3 122.2,247.1 121.6,247.1 121.0,247.4 120.4,247.3 119.8,247.5 119.2,247.1 118.6,247.3 118.0,247.1 117.4,247.4 116.8,247.3 116.2,247.5 115.6,247.6 115.0,247.2 114.4,247.2 113.8,247.1 113.2,247.4 112.6,247.3 112.0,247.3 111.4,247.1 110.8,247.5 110.2,247.3 109.6,247.0 109.0,247.0 108.4,247.3 107.8,247.3 107.2,247.3 106.6,247.2 106.0,246.9 105.4,247.0 104.8,247.0 104.2,247.1 103.6,246.9 103.0,247.2 102.4,247.0 101.8,247.3 101.2,247.2 100.6,247.1 100.0,246.8 99.4,246.9 98.8,246.8 98.2,247.1 97.6,246.8 97.0,247.2 96.4,246.8 95.8,246.5 95.2,246.6 94.6,246.9 94.0,246.8 93.4,246.5 92.8,246.9 92.2,246.6 91.6,246.8 91.0,246.6 90.4,246.3 89.8,246.7 89.2,246.6 88.6,246.4 88.0,246.4 87.4,246.2 86.8,246.5 86.2,246.1 85.6,246.3 85.0,246.1 84.4,246.0 83.8,246.1 83.2,246.2 82.6,245.9 82.0,246.1 81.4,246.2 80.8,245.8 80.2,246.1 79.6,246.1 79.0,245.6 78.4,246.0 77.8,245.5 77.2,245.4 76.6,245.4 76.0,245.2 75.4,245.2 74.8,245.0 74.2,245.4 73.6,245.0 73.0,245.2 72.4,245.1 71.8,245.1 71.2,244.8 70.6,244.9 70.0,244.7 69.4,244.9 68.8,244.2 68.2,244.2 67.6,244.1 67.0,244.3 66.4,244.5 65.8,243.9 65.2,244.1 64.6,243.9 64.0,244.0 63.4,243.8 62.8,244.0 62.2,243.7 61.6,243.9 61.0,243.8 60.4,243.2 59.8,243.4 59.2,243.5 58.6,243.1 58.0,243.2 57.4,243.4 56.8,243.3 56.2,242.7 55.6,243.3 55.0,242.7 54.4,242.5 53.8,243.1 53.2,242.3 52.6,242.9 52.0,242.6 51.4,242.9 50.8,242.4 50.2,242.5 49.6,242.1 49.0,242.5 48.4,241.9 47.8,242.1 47.2,242.5 46.6,242.0 46.0,241.6 45.4,242.1 44.8,241.8 44.2,241.7 43.6,241.8 43.0,241.7 42.4,241.8 41.8,241.4 41.2,241.1 40.6,241.5 40.0,241.3Z" fill="#f5101a" stroke="#f5101a" stroke-width="0.35"/>
<path d="M40.0,245.5 40.6,245.8 41.2,245.4 41.8,245.6 42.4,245.7 43.0,245.8 43.6,245.9 44.2,245.7 44.8,245.9 45.4,246.0 46.0,245.9 46.6,246.0 47.2,246.1 47.8,246.1 48.4,246.3 49.0,246.0 49.6,246.0 50.2,246.2 50.8,246.0 51.4,246.6 52.0,246.4 52.6,246.7 53.2,246.5 53.8,246.7 54.4,246.6 55.0,246.5 55.6,246.8 56.2,246.9 56.8,246.9 57.4,246.9 58.0,246.8 58.6,247.0 59.2,246.8 59.8,247.0 60.4,247.0 61.0,247.1 61.6,246.9 62.2,247.1 62.8,247.4 63.4,247.0 64.0,247.1 64.6,247.4 65.2,247.2 65.8,247.6 66.4,247.5 67.0,247.6 67.6,247.7 68.2,247.5 68.8,247.7 69.4,247.5 70.0,247.8 70.6,248.1 71.2,248.0 71.8,247.6 72.4,248.1 73.0,248.3 73.6,248.3 74.2,248.4 74.8,248.0 75.4,248.0 76.0,248.2 76.6,248.3 77.2,248.3 77.8,248.7 78.4,248.7 79.0,248.6 79.6,248.7 80.2,248.9 80.8,248.5 81.4,248.8 82.0,248.8 82.6,249.0 83.2,249.1 83.8,249.0 84.4,248.8 85.0,248.9 85.6,249.2 86.2,249.4 86.8,249.0 87.4,249.4 88.0,249.3 88.6,249.6 89.2,249.3 89.8,249.5 90.4,249.5 91.0,249.6 91.6,249.7 92.2,249.5 92.8,249.3 93.4,249.9 94.0,249.9 94.6,250.1 95.2,249.7 95.8,249.8 96.4,250.1 97.0,250.0 97.6,249.8 98.2,250.0 98.8,250.2 99.4,249.9 100.0,249.9 100.6,250.2 101.2,249.8 101.8,249.9 102.4,249.9 103.0,250.0 103.6,250.2 104.2,249.8 104.8,250.0 105.4,250.1 106.0,250.1 106.6,249.8 107.2,250.0 107.8,249.9 108.4,249.9 109.0,249.6 109.6,249.9 110.2,250.1 110.8,249.9 111.4,249.9 112.0,249.9 112.6,249.8 113.2,249.9 113.8,250.1 114.4,250.1 115.0,250.0 115.6,250.1 116.2,249.7 116.8,249.9 117.4,249.9 118.0,249.9 118.6,249.8 119.2,249.8 119.8,249.7 120.4,249.6 121.0,249.5 121.6,249.3 122.2,249.2 122.8,249.7 123.4,249.5 124.0,249.3 124.6,249.5 125.2,249.1 125.8,249.4 126.4,249.1 127.0,249.1 127.6,249.0 128.2,249.3 128.8,249.1 129.4,248.8 130.0,249.2 130.6,249.1 131.2,248.9 131.8,248.7 132.4,248.9 133.0,248.8 133.6,248.7 134.2,248.4 134.8,248.2 135.4,248.2 136.0,247.9 136.6,248.1 137.2,247.9 137.8,248.0 138.4,247.7 139.0,247.3 139.6,247.6 140.2,247.6 140.8,247.3 141.4,247.2 142.0,247.0 142.6,246.8 143.2,246.9 143.8,246.5 144.4,246.3 145.0,245.9 145.6,245.7 146.2,245.5 146.8,245.4 147.4,244.9 148.0,245.0 148.6,244.6 149.2,244.2 149.8,243.7 150.4,243.8 151.0,243.2 151.6,242.9 152.2,242.5 152.8,242.6 153.4,242.2 154.0,240.8 154.6,241.1 155.2,240.1 155.8,239.8 156.4,239.2 157.0,238.3 157.6,237.0 158.2,236.6 158.8,235.4 159.4,234.8 160.0,234.2 160.6,233.3 161.2,232.5 161.8,232.3 162.4,231.0 163.0,230.0 163.6,228.8 164.2,228.2 164.8,227.1 165.4,226.2 166.0,225.2 166.6,224.4 167.2,224.4 167.8,223.0 168.4,222.1 169.0,219.2 169.6,218.6 170.2,218.2 170.8,216.5 171.4,214.8 172.0,213.5 172.6,213.3 173.2,211.3 173.8,209.3 174.4,210.6 175.0,209.0 175.6,207.5 176.2,206.9 176.8,204.2 177.4,203.5 178.0,202.4 178.6,201.2 179.2,201.2 179.8,200.4 180.4,198.4 181.0,197.6 181.6,194.7 182.2,195.2 182.8,194.9 183.4,192.6 184.0,192.2 184.6,192.5 185.2,189.0 185.8,189.9 186.4,189.6 187.0,187.5 187.6,185.8 188.2,187.0 188.8,184.6 189.4,183.5 190.0,184.9 190.6,182.0 191.2,182.3 191.8,182.5 192.4,180.5 193.0,180.4 193.6,180.0 194.2,179.5 194.8,178.4 195.4,176.9 196.0,175.4 196.6,176.3 197.2,173.4 197.8,174.6 198.4,173.4 199.0,170.6 199.6,169.1 200.2,167.9 200.8,168.2 201.4,168.0 202.0,168.5 202.6,166.2 203.2,166.7 203.8,164.9 204.4,163.8 205.0,162.3 205.6,163.4 206.2,160.4 206.8,159.7 207.4,159.7 208.0,159.1 208.6,158.7 209.2,157.4 209.8,156.6 210.4,156.4 211.0,155.4 211.6,158.0 212.2,155.6 212.8,156.0 213.4,156.2 214.0,153.1 214.6,152.9 215.2,153.4 215.8,153.1 216.4,152.4 217.0,151.7 217.6,152.0 218.2,151.5 218.8,152.6 219.4,149.2 220.0,151.5 220.6,150.3 221.2,151.0 221.8,150.3 222.4,147.4 223.0,149.0 223.6,147.5 224.2,149.2 224.8,148.5 225.4,144.9 226.0,144.2 226.6,147.4 227.2,144.7 227.8,145.4 228.4,145.7 229.0,145.8 229.6,145.2 230.2,143.2 230.8,143.9 231.4,144.2 232.0,145.7 232.6,144.8 233.2,142.2 233.8,143.3 234.4,143.8 235.0,144.8 235.6,143.7 236.2,143.5 236.8,142.5 237.4,142.8 238.0,143.1 238.6,143.4 239.2,143.0 239.8,141.5 240.4,142.7 241.0,139.4 241.6,141.9 242.2,140.4 242.8,140.8 243.4,141.1 244.0,140.1 244.6,141.1 245.2,140.7 245.8,140.7 246.4,138.7 247.0,139.1 247.6,140.1 248.2,138.0 248.8,139.6 249.4,138.7 250.0,138.9 250.6,139.4 251.2,137.2 251.8,137.4 252.4,136.2 253.0,136.8 253.6,139.9 254.2,138.2 254.8,136.6 255.4,139.2 256.0,138.9 256.6,138.0 257.2,137.4 257.8,138.6 258.4,138.7 259.0,137.2 259.6,139.8 260.2,137.3 260.8,138.6 261.4,137.9 262.0,137.7 262.6,139.8 263.2,137.2 263.8,137.5 264.4,139.1 265.0,139.7 265.6,140.2 266.2,139.4 266.8,138.2 267.4,137.9 268.0,139.6 268.6,140.0 269.2,139.7 269.8,137.7 270.4,140.7 271.0,140.6 271.6,138.9 272.2,139.9 272.8,140.5 273.4,138.8 274.0,140.6 274.6,138.6 275.2,139.9 275.8,141.0 276.4,141.2 277.0,141.1 277.6,139.3 278.2,141.1 278.8,142.1 279.4,141.4 280.0,141.9 280.6,140.1 281.2,139.9 281.8,141.3 282.4,140.9 283.0,141.5 283.6,140.7 284.2,140.7 284.8,141.7 285.4,140.9 286.0,143.6 286.6,143.3 287.2,141.4 287.8,142.7 288.4,143.0 289.0,142.3 289.6,143.0 290.2,140.6 290.8,143.2 291.4,141.8 292.0,142.7 292.6,141.8 293.2,143.0 293.8,141.8 294.4,143.2 295.0,145.1 295.6,142.9 296.2,142.7 296.8,145.5 297.4,142.7 298.0,144.4 298.6,144.0 299.2,146.0 299.8,143.8 300.4,144.7 301.0,145.6 301.6,144.5 302.2,146.1 302.8,146.4 303.4,147.1 304.0,146.8 304.6,146.2 305.2,147.9 305.8,147.1 306.4,147.7 307.0,149.2 307.6,148.3 308.2,148.8 308.8,149.5 309.4,148.7 310.0,151.1 310.6,150.3 311.2,150.4 311.8,148.1 312.4,150.2 313.0,150.7 313.6,152.6 314.2,152.0 314.8,152.5 315.4,151.0 316.0,152.9 316.6,151.9 317.2,152.8 317.8,152.4 318.4,155.6 319.0,152.9 319.6,153.1 320.2,156.0 320.8,156.5 321.4,156.0 322.0,155.4 322.6,155.8 323.2,156.3 323.8,154.7 324.4,156.4 325.0,154.7 325.6,156.9 326.2,158.3 326.8,156.1 327.4,156.3 328.0,158.2 328.6,157.5 329.2,158.1 329.8,159.7 330.4,158.8 331.0,158.8 331.6,159.2 332.2,159.6 332.8,159.6 333.4,159.5 334.0,159.5 334.6,161.7 335.2,159.5 335.8,161.1 336.4,160.5 337.0,161.6 337.6,162.8 338.2,161.2 338.8,162.2 339.4,161.9 340.0,162.9 340.6,163.2 341.2,163.1 341.8,161.0 342.4,161.7 343.0,161.8 343.6,163.5 344.2,162.7 344.8,164.6 345.4,162.5 346.0,163.7 346.6,163.2 347.2,165.1 347.8,163.5 348.4,165.7 349.0,163.2 349.6,164.9 350.2,165.5 350.8,165.5 351.4,164.5 352.0,165.4 352.6,166.1 353.2,166.2 353.8,165.1 354.4,164.6 355.0,167.0 355.6,165.1 356.2,167.0 356.8,166.9 357.4,167.6 358.0,166.4 358.6,165.6 359.2,165.5 359.8,166.9 360.4,167.9 361.0,167.1 361.6,167.7 362.2,167.7 362.8,168.0 363.4,166.3 364.0,167.8 364.6,169.0 365.2,167.8 365.8,167.4 366.4,167.2 367.0,167.5 367.6,167.4 368.2,169.1 368.8,168.8 369.4,168.7 370.0,169.6 370.6,169.0 371.2,169.7 371.8,170.1 372.4,168.3 373.0,170.2 373.6,169.5 374.2,169.3 374.8,168.6 375.4,169.9 376.0,170.1 376.6,169.1 377.2,170.0 377.8,170.1 378.4,171.4 379.0,170.8 379.6,171.4 380.2,171.3 380.8,171.2 381.4,170.2 382.0,170.9 382.6,171.0 383.2,172.1 383.8,172.2 384.4,170.6 385.0,172.7 385.6,171.6 386.2,171.9 386.8,172.2 387.4,173.7 388.0,174.2 388.6,172.5 389.2,173.9 389.8,174.1 390.4,172.4 391.0,172.6 391.6,173.0 392.2,174.0 392.8,174.5 393.4,174.7 394.0,175.2 394.6,173.9 395.2,174.4 395.8,174.2 396.4,176.1 397.0,175.6 397.6,175.6 398.2,176.5 398.8,176.2 399.4,177.4 400.0,177.3 400.6,178.0 401.2,177.0 401.8,178.0 402.4,178.0 403.0,178.4 403.6,179.4 404.2,177.2 404.8,178.3 405.4,179.5 406.0,178.3 406.6,178.5 407.2,178.6 407.8,180.2 408.4,180.9 409.0,181.5 409.6,180.2 410.2,180.4 410.8,181.4 411.4,181.5 412.0,181.8 412.6,181.1 413.2,183.4 413.8,183.5 414.4,183.0 415.0,183.8 415.6,181.4 416.2,184.3 416.8,183.5 417.4,184.2 418.0,183.7 418.6,185.6 419.2,185.2 419.8,185.1 420.4,186.2 421.0,185.3 421.6,185.8 422.2,185.0 422.8,186.5 423.4,187.1 424.0,187.3 424.6,187.8 425.2,186.5 425.8,187.0 426.4,188.3 427.0,188.4 427.6,189.4 428.2,188.6 428.8,188.5 429.4,189.9 430.0,189.7 430.6,189.5 431.2,190.2 431.8,190.2 432.4,191.3 433.0,190.2 433.6,191.5 434.2,191.4 434.8,192.1 435.4,192.7 436.0,191.4 436.6,193.0 437.2,192.4 437.8,192.6 438.4,193.6 439.0,193.4 439.6,193.5 440.2,193.9 440.8,194.3 441.4,194.7 442.0,193.6 442.6,194.6 443.2,194.4 443.8,194.7 444.4,195.6 445.0,195.1 445.6,194.9 446.2,195.0 446.8,195.1 447.4,196.7 448.0,196.6 448.6,197.3 449.2,195.8 449.8,196.6 450.4,196.7 451.0,197.3 451.6,197.8 452.2,197.7 452.8,197.6 453.4,197.7 454.0,197.3 454.6,197.4 455.2,198.6 455.8,198.9 456.4,198.0 457.0,198.1 457.6,199.3 458.2,198.5 458.8,199.7 459.4,199.8 460.0,200.1 460.6,199.9 461.2,199.5 461.8,200.2 462.4,199.9 463.0,199.8 463.6,199.2 464.2,200.8 464.8,200.6 465.4,199.5 466.0,200.1 466.6,199.8 467.2,199.8 467.8,201.1 468.4,200.3 469.0,201.2 469.6,200.1 L469.6,203.6 469.0,203.5 468.4,202.9 467.8,203.0 467.2,202.7 466.6,202.0 466.0,201.6 465.4,202.5 464.8,201.4 464.2,202.2 463.6,202.4 463.0,201.3 462.4,201.6 461.8,201.9 461.2,200.7 460.6,202.2 460.0,200.8 459.4,200.4 458.8,200.5 458.2,200.8 457.6,201.4 457.0,200.9 456.4,200.7 455.8,200.1 455.2,200.0 454.6,199.7 454.0,200.5 453.4,199.3 452.8,199.9 452.2,200.2 451.6,200.3 451.0,200.2 450.4,198.4 449.8,198.2 449.2,198.9 448.6,198.6 448.0,198.6 447.4,198.2 446.8,198.7 446.2,197.9 445.6,198.8 445.0,197.0 444.4,196.9 443.8,197.6 443.2,198.3 442.6,196.5 442.0,197.7 441.4,196.7 440.8,195.6 440.2,197.2 439.6,195.1 439.0,196.0 438.4,196.1 437.8,194.9 437.2,196.3 436.6,194.6 436.0,193.9 435.4,194.8 434.8,193.8 434.2,193.3 433.6,192.6 433.0,192.4 432.4,193.3 431.8,192.7 431.2,191.6 430.6,192.9 430.0,192.2 429.4,192.7 428.8,192.2 428.2,192.4 427.6,191.1 427.0,191.5 426.4,190.7 425.8,190.9 425.2,190.1 424.6,190.2 424.0,189.5 423.4,189.5 422.8,189.0 422.2,187.9 421.6,188.0 421.0,187.4 420.4,187.2 419.8,187.4 419.2,188.5 418.6,187.4 418.0,187.4 417.4,186.2 416.8,187.5 416.2,187.6 415.6,186.4 415.0,187.5 414.4,186.3 413.8,184.7 413.2,184.5 412.6,184.9 412.0,185.7 411.4,185.3 410.8,185.3 410.2,183.4 409.6,182.8 409.0,184.6 408.4,183.9 407.8,182.6 407.2,182.1 406.6,181.6 406.0,182.0 405.4,181.4 404.8,182.2 404.2,180.6 403.6,180.2 403.0,180.0 402.4,180.9 401.8,181.2 401.2,181.4 400.6,180.9 400.0,180.3 399.4,178.8 398.8,179.1 398.2,179.3 397.6,179.1 397.0,178.8 396.4,178.5 395.8,179.2 395.2,179.4 394.6,179.3 394.0,177.3 393.4,177.5 392.8,176.3 392.2,178.0 391.6,176.2 391.0,177.1 390.4,177.5 389.8,178.2 389.2,175.1 388.6,175.7 388.0,174.9 387.4,176.9 386.8,174.8 386.2,174.4 385.6,175.8 385.0,175.4 384.4,175.1 383.8,173.8 383.2,174.0 382.6,173.8 382.0,175.4 381.4,173.1 380.8,174.1 380.2,175.0 379.6,174.5 379.0,174.3 378.4,172.3 377.8,173.2 377.2,173.5 376.6,173.0 376.0,173.4 375.4,173.6 374.8,172.0 374.2,173.9 373.6,173.8 373.0,172.1 372.4,173.1 371.8,171.0 371.2,172.4 370.6,172.8 370.0,170.6 369.4,171.3 368.8,171.9 368.2,170.4 367.6,172.6 367.0,172.4 366.4,170.1 365.8,169.9 365.2,171.9 364.6,171.8 364.0,169.8 363.4,172.0 362.8,169.5 362.2,171.0 361.6,169.4 361.0,170.8 360.4,169.0 359.8,170.5 359.2,170.4 358.6,170.8 358.0,170.0 357.4,170.7 356.8,170.5 356.2,168.7 355.6,170.5 355.0,169.3 354.4,168.6 353.8,169.3 353.2,169.0 352.6,168.1 352.0,169.3 351.4,169.4 350.8,169.2 350.2,169.3 349.6,168.7 349.0,167.5 348.4,167.1 347.8,168.6 347.2,167.3 346.6,166.0 346.0,166.3 345.4,167.0 344.8,167.7 344.2,168.2 343.6,165.8 343.0,165.3 342.4,168.3 341.8,164.8 341.2,165.6 340.6,164.7 340.0,166.0 339.4,166.5 338.8,164.1 338.2,166.3 337.6,165.3 337.0,165.3 336.4,164.8 335.8,164.5 335.2,165.3 334.6,163.4 334.0,164.1 333.4,165.0 332.8,162.4 332.2,163.6 331.6,161.7 331.0,163.6 330.4,161.7 329.8,163.4 329.2,162.5 328.6,160.5 328.0,163.1 327.4,161.2 326.8,159.8 326.2,160.5 325.6,162.1 325.0,160.6 324.4,161.7 323.8,159.0 323.2,159.3 322.6,161.0 322.0,159.4 321.4,158.9 320.8,157.5 320.2,157.3 319.6,156.8 319.0,158.1 318.4,157.6 317.8,156.7 317.2,157.7 316.6,156.1 316.0,156.9 315.4,155.2 314.8,156.1 314.2,156.4 313.6,155.4 313.0,156.5 312.4,153.4 311.8,152.9 311.2,154.8 310.6,152.9 310.0,155.2 309.4,153.2 308.8,155.6 308.2,152.4 307.6,152.5 307.0,150.8 306.4,150.7 305.8,150.0 305.2,152.0 304.6,150.5 304.0,150.0 303.4,150.0 302.8,151.8 302.2,149.5 301.6,149.3 301.0,152.2 300.4,148.4 299.8,150.5 299.2,148.2 298.6,150.5 298.0,149.6 297.4,147.4 296.8,149.7 296.2,148.1 295.6,146.9 295.0,147.6 294.4,147.1 293.8,146.0 293.2,148.5 292.6,148.2 292.0,147.8 291.4,148.4 290.8,146.6 290.2,146.1 289.6,145.7 289.0,145.8 288.4,146.1 287.8,144.9 287.2,147.1 286.6,145.5 286.0,144.4 285.4,147.0 284.8,145.0 284.2,146.9 283.6,144.7 283.0,146.2 282.4,146.7 281.8,146.8 281.2,146.5 280.6,145.0 280.0,143.3 279.4,145.0 278.8,146.1 278.2,144.0 277.6,143.1 277.0,143.6 276.4,143.0 275.8,146.1 275.2,146.0 274.6,143.9 274.0,143.7 273.4,142.8 272.8,142.1 272.2,144.0 271.6,142.9 271.0,144.0 270.4,143.3 269.8,144.6 269.2,144.4 268.6,141.7 268.0,143.7 267.4,141.9 266.8,141.7 266.2,143.6 265.6,144.2 265.0,143.4 264.4,141.9 263.8,141.7 263.2,142.6 262.6,141.3 262.0,143.8 261.4,140.6 260.8,143.6 260.2,141.5 259.6,141.9 259.0,141.2 258.4,142.3 257.8,142.2 257.2,142.6 256.6,143.5 256.0,141.3 255.4,140.8 254.8,141.1 254.2,142.6 253.6,143.8 253.0,142.4 252.4,143.7 251.8,141.6 251.2,141.8 250.6,143.3 250.0,143.7 249.4,143.0 248.8,142.4 248.2,143.6 247.6,142.7 247.0,144.5 246.4,143.4 245.8,143.6 245.2,142.5 244.6,145.7 244.0,145.2 243.4,144.2 242.8,145.7 242.2,144.9 241.6,146.2 241.0,145.1 240.4,145.4 239.8,145.2 239.2,145.4 238.6,146.5 238.0,145.0 237.4,147.2 236.8,147.2 236.2,145.4 235.6,147.7 235.0,148.1 234.4,146.2 233.8,146.1 233.2,146.2 232.6,149.0 232.0,147.5 231.4,149.5 230.8,150.1 230.2,149.5 229.6,149.5 229.0,148.0 228.4,148.9 227.8,152.5 227.2,148.7 226.6,151.1 226.0,152.1 225.4,151.7 224.8,151.1 224.2,152.4 223.6,152.4 223.0,153.3 222.4,152.5 221.8,153.7 221.2,152.0 220.6,152.8 220.0,154.4 219.4,153.4 218.8,154.6 218.2,154.1 217.6,155.3 217.0,157.8 216.4,158.4 215.8,156.1 215.2,157.2 214.6,157.3 214.0,157.4 213.4,159.4 212.8,160.0 212.2,161.8 211.6,161.7 211.0,160.0 210.4,162.0 209.8,162.8 209.2,164.5 208.6,164.9 208.0,164.9 207.4,164.4 206.8,165.9 206.2,165.6 205.6,168.6 205.0,166.6 204.4,169.7 203.8,169.5 203.2,169.2 202.6,170.5 202.0,170.9 201.4,171.6 200.8,171.7 200.2,172.1 199.6,175.5 199.0,174.3 198.4,174.9 197.8,176.1 197.2,178.2 196.6,178.9 196.0,178.3 195.4,180.3 194.8,180.2 194.2,183.4 193.6,184.6 193.0,182.6 192.4,185.0 191.8,186.3 191.2,185.2 190.6,185.8 190.0,188.6 189.4,189.3 188.8,189.2 188.2,189.4 187.6,190.1 187.0,190.5 186.4,192.5 185.8,192.0 185.2,193.3 184.6,194.6 184.0,196.9 183.4,197.0 182.8,196.7 182.2,200.0 181.6,201.5 181.0,201.0 180.4,201.8 179.8,203.1 179.2,203.4 178.6,205.5 178.0,206.8 177.4,205.8 176.8,207.6 176.2,208.1 175.6,211.3 175.0,211.4 174.4,212.1 173.8,212.9 173.2,215.3 172.6,215.8 172.0,217.5 171.4,217.1 170.8,219.6 170.2,219.5 169.6,221.1 169.0,222.6 168.4,224.2 167.8,224.4 167.2,225.8 166.6,226.9 166.0,227.2 165.4,228.3 164.8,229.2 164.2,229.6 163.6,230.8 163.0,232.2 162.4,231.8 161.8,233.4 161.2,234.4 160.6,234.3 160.0,235.0 159.4,236.1 158.8,237.3 158.2,238.3 157.6,239.1 157.0,239.8 156.4,240.1 155.8,240.6 155.2,241.5 154.6,241.6 154.0,242.3 153.4,242.4 152.8,243.3 152.2,243.9 151.6,243.7 151.0,244.2 150.4,244.8 149.8,244.8 149.2,245.2 148.6,245.2 148.0,246.0 147.4,245.8 146.8,245.8 146.2,246.4 145.6,246.3 145.0,246.7 144.4,246.8 143.8,247.0 143.2,247.0 142.6,247.6 142.0,247.6 141.4,247.8 140.8,247.7 140.2,248.0 139.6,248.3 139.0,248.1 138.4,248.2 137.8,248.6 137.2,248.7 136.6,248.7 136.0,248.5 135.4,248.7 134.8,248.9 134.2,249.0 133.6,249.0 133.0,249.0 132.4,249.2 131.8,249.2 131.2,249.3 130.6,249.3 130.0,249.8 129.4,249.5 128.8,249.8 128.2,249.9 127.6,249.7 127.0,249.8 126.4,249.9 125.8,249.7 125.2,250.0 124.6,249.9 124.0,249.9 123.4,250.1 122.8,249.8 122.2,250.0 121.6,250.1 121.0,250.4 120.4,250.6 119.8,250.3 119.2,250.0 118.6,250.2 118.0,250.1 117.4,250.3 116.8,250.1 116.2,250.5 115.6,250.4 115.0,250.5 114.4,250.4 113.8,250.4 113.2,250.4 112.6,250.7 112.0,250.4 111.4,250.6 110.8,250.7 110.2,250.4 109.6,250.7 109.0,250.8 108.4,250.5 107.8,250.4 107.2,250.5 106.6,250.8 106.0,250.8 105.4,250.7 104.8,250.7 104.2,250.8 103.6,250.4 103.0,250.7 102.4,250.6 101.8,250.5 101.2,250.6 100.6,250.9 100.0,251.0 99.4,250.5 98.8,250.6 98.2,250.8 97.6,250.8 97.0,250.7 96.4,250.4 95.8,250.4 95.2,250.3 94.6,250.4 94.0,250.4 93.4,250.5 92.8,250.2 92.2,250.4 91.6,250.5 91.0,250.1 90.4,250.2 89.8,250.2 89.2,250.1 88.6,250.0 88.0,249.8 87.4,250.0 86.8,249.7 86.2,249.7 85.6,249.8 85.0,249.6 84.4,249.8 83.8,249.5 83.2,249.5 82.6,249.4 82.0,249.3 81.4,249.4 80.8,249.4 80.2,249.3 79.6,249.4 79.0,249.3 78.4,249.4 77.8,249.3 77.2,249.1 76.6,249.3 76.0,249.2 75.4,248.9 74.8,249.2 74.2,249.1 73.6,249.2 73.0,248.8 72.4,248.6 71.8,248.6 71.2,248.8 70.6,248.4 70.0,248.8 69.4,248.2 68.8,248.4 68.2,248.6 67.6,248.0 67.0,248.0 66.4,248.4 65.8,247.9 65.2,248.3 64.6,247.9 64.0,248.0 63.4,248.2 62.8,247.7 62.2,247.8 61.6,248.0 61.0,247.7 60.4,247.8 59.8,247.9 59.2,247.6 58.6,247.5 58.0,247.7 57.4,247.6 56.8,247.4 56.2,247.2 55.6,247.7 55.0,247.3 54.4,247.4 53.8,247.0 53.2,247.1 52.6,247.0 52.0,246.9 51.4,246.8 50.8,247.1 50.2,246.8 49.6,246.9 49.0,247.0 48.4,246.5 47.8,246.9 47.2,246.5 46.6,246.8 46.0,246.5 45.4,246.5 44.8,246.7 44.2,246.6 43.6,246.5 43.0,246.5 42.4,246.4 41.8,246.0 41.2,246.4 40.6,246.0 40.0,246.4Z" fill="#10c4d8" stroke="#10c4d8" stroke-width="0.35"/>
<path d="M40.0,250.6 40.6,250.5 41.2,250.6 41.8,250.4 42.4,250.4 43.0,250.4 43.6,250.9 44.2,250.9 44.8,251.0 45.4,250.8 46.0,251.0 46.6,250.8 47.2,250.7 47.8,250.9 48.4,250.7 49.0,250.8 49.6,251.1 50.2,250.9 50.8,251.0 51.4,250.8 52.0,251.1 52.6,250.8 53.2,251.0 53.8,251.2 54.4,251.0 55.0,250.9 55.6,251.2 56.2,251.2 56.8,251.1 57.4,250.9 58.0,250.9 58.6,251.0 59.2,250.9 59.8,251.0 60.4,251.3 61.0,251.3 61.6,251.2 62.2,251.2 62.8,251.2 63.4,251.4 64.0,251.4 64.6,251.4 65.2,251.5 65.8,251.5 66.4,251.4 67.0,251.2 67.6,251.4 68.2,251.5 68.8,251.6 69.4,251.5 70.0,251.7 70.6,251.7 71.2,251.5 71.8,251.8 72.4,251.6 73.0,251.7 73.6,251.5 74.2,251.5 74.8,251.6 75.4,251.6 76.0,251.6 76.6,251.7 77.2,251.9 77.8,251.6 78.4,251.9 79.0,251.8 79.6,252.1 80.2,252.0 80.8,251.7 81.4,252.1 82.0,251.9 82.6,251.9 83.2,251.8 83.8,252.0 84.4,252.0 85.0,252.3 85.6,252.1 86.2,252.2 86.8,252.3 87.4,252.4 88.0,252.4 88.6,252.2 89.2,252.2 89.8,252.0 90.4,252.2 91.0,252.3 91.6,252.2 92.2,252.5 92.8,252.1 93.4,252.2 94.0,252.3 94.6,252.5 95.2,252.3 95.8,252.4 96.4,252.4 97.0,252.3 97.6,252.5 98.2,252.5 98.8,252.5 99.4,252.8 100.0,252.6 100.6,252.5 101.2,252.4 101.8,252.3 102.4,252.4 103.0,252.6 103.6,252.8 104.2,252.6 104.8,252.4 105.4,252.5 106.0,252.6 106.6,252.7 107.2,252.8 107.8,252.8 108.4,252.7 109.0,252.4 109.6,252.6 110.2,252.8 110.8,252.7 111.4,252.9 112.0,252.8 112.6,252.5 113.2,252.6 113.8,252.7 114.4,252.8 115.0,252.6 115.6,252.4 116.2,252.7 116.8,252.9 117.4,252.9 118.0,252.9 118.6,252.2 119.2,252.6 119.8,252.5 120.4,252.8 121.0,252.8 121.6,252.5 122.2,252.4 122.8,252.7 123.4,252.9 124.0,252.3 124.6,252.6 125.2,252.5 125.8,252.8 126.4,252.5 127.0,252.4 127.6,252.5 128.2,252.7 128.8,252.5 129.4,252.8 130.0,252.7 130.6,252.6 131.2,252.4 131.8,252.8 132.4,252.4 133.0,252.4 133.6,252.3 134.2,252.6 134.8,252.7 135.4,252.6 136.0,252.2 136.6,252.1 137.2,252.1 137.8,252.1 138.4,252.1 139.0,251.6 139.6,251.5 140.2,251.8 140.8,251.4 141.4,250.7 142.0,250.1 142.6,249.9 143.2,249.2 143.8,248.2 144.4,247.1 145.0,246.4 145.6,244.6 146.2,243.5 146.8,241.9 147.4,241.1 148.0,238.6 148.6,237.9 149.2,237.1 149.8,235.1 150.4,234.2 151.0,232.8 151.6,232.2 152.2,231.4 152.8,229.2 153.4,228.6 154.0,226.6 154.6,226.4 155.2,223.9 155.8,223.4 156.4,221.7 157.0,221.8 157.6,219.9 158.2,219.4 158.8,216.6 159.4,216.3 160.0,215.8 160.6,214.6 161.2,211.7 161.8,212.1 162.4,210.6 163.0,208.7 163.6,206.7 164.2,204.9 164.8,204.4 165.4,203.7 166.0,200.9 166.6,201.7 167.2,200.1 167.8,197.3 168.4,197.9 169.0,196.4 169.6,195.0 170.2,192.6 170.8,193.2 171.4,191.4 172.0,189.4 172.6,188.5 173.2,186.8 173.8,185.7 174.4,185.5 175.0,184.6 175.6,184.7 176.2,185.0 176.8,183.4 177.4,183.1 178.0,182.0 178.6,182.4 179.2,182.2 179.8,180.4 180.4,181.4 181.0,180.8 181.6,179.1 182.2,180.4 182.8,180.4 183.4,178.5 184.0,178.5 184.6,177.9 185.2,178.9 185.8,177.5 186.4,178.2 187.0,177.1 187.6,174.7 188.2,176.7 188.8,175.6 189.4,173.2 190.0,172.8 190.6,173.8 191.2,172.7 191.8,172.6 192.4,172.7 193.0,171.2 193.6,172.8 194.2,170.6 194.8,172.5 195.4,169.8 196.0,169.8 196.6,170.4 197.2,168.7 197.8,169.9 198.4,168.8 199.0,170.4 199.6,169.2 200.2,168.1 200.8,167.8 201.4,169.5 202.0,169.2 202.6,166.5 203.2,168.6 203.8,169.3 204.4,167.4 205.0,168.0 205.6,167.1 206.2,167.7 206.8,167.5 207.4,167.7 208.0,167.9 208.6,166.2 209.2,166.8 209.8,165.9 210.4,166.1 211.0,167.7 211.6,165.9 212.2,166.0 212.8,166.8 213.4,166.6 214.0,167.7 214.6,166.0 215.2,167.2 215.8,166.4 216.4,167.4 217.0,167.5 217.6,166.0 218.2,166.3 218.8,165.8 219.4,165.4 220.0,164.6 220.6,167.1 221.2,165.7 221.8,165.7 222.4,165.5 223.0,165.7 223.6,165.6 224.2,164.8 224.8,165.8 225.4,165.5 226.0,165.1 226.6,165.7 227.2,165.6 227.8,166.4 228.4,166.2 229.0,166.6 229.6,166.0 230.2,165.9 230.8,165.1 231.4,164.9 232.0,164.2 232.6,164.9 233.2,163.9 233.8,165.1 234.4,164.1 235.0,164.6 235.6,164.3 236.2,165.2 236.8,163.4 237.4,163.8 238.0,165.4 238.6,164.3 239.2,163.0 239.8,165.4 240.4,164.7 241.0,163.2 241.6,165.3 242.2,163.3 242.8,163.7 243.4,163.2 244.0,163.6 244.6,162.4 245.2,163.9 245.8,163.1 246.4,164.4 247.0,162.6 247.6,162.4 248.2,161.5 248.8,161.5 249.4,163.6 250.0,163.8 250.6,163.4 251.2,163.1 251.8,161.5 252.4,161.9 253.0,161.8 253.6,161.9 254.2,162.7 254.8,161.8 255.4,160.1 256.0,160.5 256.6,161.1 257.2,161.1 257.8,160.0 258.4,161.3 259.0,160.7 259.6,161.8 260.2,161.4 260.8,161.3 261.4,161.1 262.0,162.0 262.6,160.2 263.2,161.5 263.8,160.2 264.4,160.1 265.0,159.9 265.6,160.9 266.2,160.8 266.8,159.5 267.4,160.5 268.0,161.1 268.6,159.1 269.2,161.5 269.8,159.1 270.4,160.7 271.0,160.5 271.6,158.9 272.2,160.4 272.8,159.7 273.4,160.5 274.0,158.3 274.6,159.7 275.2,160.4 275.8,161.4 276.4,160.7 277.0,159.7 277.6,160.9 278.2,160.3 278.8,161.1 279.4,160.0 280.0,159.1 280.6,159.5 281.2,159.1 281.8,158.6 282.4,159.7 283.0,159.5 283.6,157.6 284.2,159.4 284.8,158.5 285.4,157.8 286.0,157.9 286.6,158.9 287.2,159.5 287.8,158.6 288.4,158.4 289.0,158.8 289.6,159.2 290.2,158.9 290.8,159.7 291.4,159.2 292.0,159.3 292.6,158.1 293.2,157.2 293.8,159.4 294.4,159.8 295.0,157.8 295.6,158.9 296.2,158.5 296.8,159.7 297.4,159.5 298.0,158.1 298.6,158.4 299.2,157.7 299.8,157.5 300.4,159.2 301.0,158.5 301.6,159.0 302.2,158.9 302.8,158.9 303.4,156.7 304.0,158.7 304.6,159.7 305.2,158.6 305.8,157.9 306.4,158.2 307.0,159.2 307.6,160.8 308.2,158.6 308.8,158.4 309.4,158.7 310.0,160.0 310.6,159.2 311.2,158.8 311.8,161.3 312.4,159.5 313.0,159.8 313.6,161.8 314.2,159.8 314.8,161.1 315.4,162.0 316.0,162.0 316.6,160.2 317.2,162.2 317.8,160.6 318.4,160.7 319.0,161.9 319.6,162.0 320.2,161.1 320.8,162.0 321.4,161.1 322.0,162.5 322.6,161.9 323.2,163.2 323.8,161.6 324.4,161.7 325.0,162.5 325.6,163.3 326.2,163.3 326.8,162.0 327.4,163.5 328.0,163.1 328.6,163.8 329.2,163.8 329.8,163.1 330.4,162.6 331.0,164.5 331.6,164.4 332.2,164.7 332.8,165.1 333.4,164.2 334.0,163.1 334.6,163.0 335.2,164.2 335.8,164.4 336.4,163.3 337.0,164.3 337.6,164.3 338.2,164.1 338.8,165.6 339.4,163.7 340.0,165.7 340.6,164.6 341.2,163.6 341.8,164.3 342.4,165.3 343.0,164.3 343.6,163.9 344.2,164.7 344.8,166.0 345.4,164.2 346.0,166.5 346.6,163.9 347.2,163.7 347.8,166.2 348.4,165.3 349.0,164.9 349.6,166.3 350.2,166.1 350.8,166.3 351.4,166.4 352.0,166.6 352.6,166.2 353.2,165.0 353.8,165.2 354.4,165.1 355.0,165.4 355.6,165.1 356.2,166.8 356.8,165.8 357.4,167.2 358.0,166.0 358.6,165.1 359.2,166.1 359.8,166.2 360.4,166.3 361.0,166.4 361.6,164.4 362.2,165.0 362.8,165.6 363.4,165.0 364.0,165.6 364.6,166.8 365.2,166.5 365.8,165.7 366.4,165.8 367.0,165.9 367.6,165.5 368.2,167.2 368.8,165.3 369.4,167.2 370.0,165.3 370.6,166.6 371.2,165.3 371.8,166.2 372.4,165.7 373.0,167.7 373.6,166.5 374.2,167.0 374.8,165.9 375.4,165.9 376.0,166.4 376.6,165.8 377.2,165.1 377.8,167.3 378.4,166.1 379.0,165.8 379.6,165.0 380.2,166.8 380.8,165.2 381.4,166.8 382.0,165.2 382.6,166.2 383.2,167.0 383.8,165.2 384.4,167.1 385.0,165.2 385.6,165.6 386.2,164.9 386.8,165.0 387.4,166.0 388.0,166.7 388.6,166.3 389.2,166.9 389.8,165.2 390.4,166.6 391.0,165.8 391.6,166.1 392.2,165.7 392.8,164.9 393.4,165.5 394.0,165.3 394.6,166.3 395.2,165.6 395.8,165.9 396.4,164.4 397.0,166.3 397.6,164.6 398.2,164.4 398.8,164.8 399.4,166.0 400.0,165.4 400.6,165.3 401.2,165.2 401.8,164.2 402.4,163.2 403.0,163.6 403.6,163.3 404.2,163.7 404.8,164.6 405.4,162.3 406.0,164.1 406.6,164.8 407.2,162.8 407.8,164.5 408.4,163.0 409.0,163.1 409.6,164.3 410.2,163.8 410.8,163.1 411.4,163.1 412.0,163.4 412.6,163.5 413.2,163.9 413.8,162.8 414.4,163.4 415.0,162.7 415.6,162.7 416.2,163.3 416.8,164.2 417.4,162.6 418.0,163.4 418.6,162.8 419.2,163.9 419.8,163.8 420.4,163.0 421.0,162.3 421.6,163.8 422.2,161.2 422.8,161.8 423.4,162.2 424.0,162.0 424.6,163.3 425.2,163.2 425.8,162.5 426.4,163.5 427.0,162.7 427.6,161.8 428.2,163.0 428.8,161.5 429.4,161.6 430.0,163.3 430.6,162.0 431.2,162.6 431.8,162.8 432.4,162.4 433.0,161.1 433.6,161.8 434.2,163.0 434.8,161.3 435.4,162.6 436.0,162.7 436.6,162.8 437.2,161.2 437.8,163.8 438.4,162.1 439.0,161.5 439.6,163.5 440.2,162.2 440.8,161.8 441.4,161.9 442.0,163.8 442.6,161.9 443.2,163.1 443.8,161.8 444.4,162.6 445.0,163.9 445.6,162.2 446.2,162.7 446.8,163.1 447.4,162.6 448.0,163.2 448.6,164.1 449.2,162.0 449.8,163.7 450.4,163.8 451.0,164.4 451.6,162.7 452.2,162.3 452.8,163.5 453.4,162.7 454.0,163.8 454.6,164.0 455.2,164.3 455.8,164.4 456.4,163.8 457.0,164.5 457.6,165.3 458.2,163.7 458.8,164.8 459.4,164.6 460.0,165.3 460.6,165.7 461.2,164.2 461.8,164.9 462.4,163.6 463.0,166.1 463.6,164.0 464.2,166.3 464.8,165.9 465.4,166.4 466.0,165.2 466.6,165.7 467.2,165.9 467.8,164.2 468.4,165.3 469.0,164.5 469.6,164.7 L469.6,168.3 469.0,168.1 468.4,168.4 467.8,168.9 467.2,168.2 466.6,167.2 466.0,168.4 465.4,169.3 464.8,167.5 464.2,168.0 463.6,168.7 463.0,167.6 462.4,169.2 461.8,166.8 461.2,166.8 460.6,167.6 460.0,166.6 459.4,167.2 458.8,168.4 458.2,166.4 457.6,166.1 457.0,167.8 456.4,166.0 455.8,167.0 455.2,166.8 454.6,166.0 454.0,166.0 453.4,166.2 452.8,166.4 452.2,166.6 451.6,168.4 451.0,165.7 450.4,165.3 449.8,167.3 449.2,165.7 448.6,167.3 448.0,167.3 447.4,165.2 446.8,166.8 446.2,167.1 445.6,165.0 445.0,165.2 444.4,166.1 443.8,165.8 443.2,167.1 442.6,165.6 442.0,165.2 441.4,166.5 440.8,165.3 440.2,164.7 439.6,166.7 439.0,166.6 438.4,166.1 437.8,165.8 437.2,166.8 436.6,167.7 436.0,164.7 435.4,165.6 434.8,164.4 434.2,166.5 433.6,165.1 433.0,165.9 432.4,164.4 431.8,165.1 431.2,166.3 430.6,166.2 430.0,164.7 429.4,164.5 428.8,166.8 428.2,165.1 427.6,165.8 427.0,166.7 426.4,166.3 425.8,164.7 425.2,165.8 424.6,165.5 424.0,165.0 423.4,165.5 422.8,165.5 422.2,166.2 421.6,165.6 421.0,165.5 420.4,165.0 419.8,165.2 419.2,165.5 418.6,166.5 418.0,166.2 417.4,167.0 416.8,165.7 416.2,166.2 415.6,167.5 415.0,165.5 414.4,165.6 413.8,165.7 413.2,166.1 412.6,167.2 412.0,165.8 411.4,167.5 410.8,166.3 410.2,168.1 409.6,165.6 409.0,168.2 408.4,167.0 407.8,167.3 407.2,166.5 406.6,168.4 406.0,166.9 405.4,167.0 404.8,167.2 404.2,168.6 403.6,167.1 403.0,168.5 402.4,167.7 401.8,166.8 401.2,167.7 400.6,168.0 400.0,167.7 399.4,167.8 398.8,167.4 398.2,168.4 397.6,167.4 397.0,169.5 396.4,167.0 395.8,168.7 395.2,167.9 394.6,169.4 394.0,169.5 393.4,169.4 392.8,168.3 392.2,167.3 391.6,167.4 391.0,167.4 390.4,167.6 389.8,168.0 389.2,169.9 388.6,168.5 388.0,167.7 387.4,169.9 386.8,169.8 386.2,169.0 385.6,168.7 385.0,169.0 384.4,170.5 383.8,168.0 383.2,169.2 382.6,169.5 382.0,168.8 381.4,169.3 380.8,168.4 380.2,168.3 379.6,167.9 379.0,170.2 378.4,169.4 377.8,169.4 377.2,169.6 376.6,168.6 376.0,168.7 375.4,170.6 374.8,168.4 374.2,170.8 373.6,170.4 373.0,169.8 372.4,170.3 371.8,170.0 371.2,170.0 370.6,170.5 370.0,170.6 369.4,169.5 368.8,169.6 368.2,170.4 367.6,168.2 367.0,169.5 366.4,168.8 365.8,168.1 365.2,168.8 364.6,169.7 364.0,168.2 363.4,169.8 362.8,168.6 362.2,170.3 361.6,170.2 361.0,167.9 360.4,169.2 359.8,169.8 359.2,167.9 358.6,168.9 358.0,168.0 357.4,170.1 356.8,169.8 356.2,168.2 355.6,169.6 355.0,168.7 354.4,169.3 353.8,168.8 353.2,169.8 352.6,167.7 352.0,168.5 351.4,168.4 350.8,168.3 350.2,168.5 349.6,168.5 349.0,169.4 348.4,169.7 347.8,168.2 347.2,168.4 346.6,170.1 346.0,169.0 345.4,167.7 344.8,167.2 344.2,167.5 343.6,167.1 343.0,169.3 342.4,169.1 341.8,167.2 341.2,168.4 340.6,168.7 340.0,169.0 339.4,166.8 338.8,168.2 338.2,166.9 337.6,167.2 337.0,166.6 336.4,167.2 335.8,167.5 335.2,166.7 334.6,167.8 334.0,165.9 333.4,167.0 332.8,168.0 332.2,167.0 331.6,165.8 331.0,166.4 330.4,167.9 329.8,166.9 329.2,165.2 328.6,166.2 328.0,167.6 327.4,166.2 326.8,165.3 326.2,166.1 325.6,165.4 325.0,167.8 324.4,165.5 323.8,165.0 323.2,165.3 322.6,166.7 322.0,167.3 321.4,165.0 320.8,165.6 320.2,165.2 319.6,164.7 319.0,166.1 318.4,163.5 317.8,165.2 317.2,165.0 316.6,165.8 316.0,163.2 315.4,165.4 314.8,164.3 314.2,164.1 313.6,164.7 313.0,163.2 312.4,162.4 311.8,163.7 311.2,162.0 310.6,161.9 310.0,164.4 309.4,161.8 308.8,163.4 308.2,163.4 307.6,162.9 307.0,161.5 306.4,163.8 305.8,162.0 305.2,161.8 304.6,163.0 304.0,162.3 303.4,161.1 302.8,163.3 302.2,162.7 301.6,162.7 301.0,162.1 300.4,161.5 299.8,162.4 299.2,160.9 298.6,163.2 298.0,161.7 297.4,162.0 296.8,162.3 296.2,160.7 295.6,161.9 295.0,163.0 294.4,161.8 293.8,163.5 293.2,161.4 292.6,161.9 292.0,161.1 291.4,162.9 290.8,163.3 290.2,162.3 289.6,162.7 289.0,163.3 288.4,162.4 287.8,163.1 287.2,162.2 286.6,163.3 286.0,163.9 285.4,162.7 284.8,163.3 284.2,163.2 283.6,162.3 283.0,162.8 282.4,164.1 281.8,162.1 281.2,164.4 280.6,164.0 280.0,163.9 279.4,164.9 278.8,163.1 278.2,162.5 277.6,162.5 277.0,162.3 276.4,163.9 275.8,163.9 275.2,163.4 274.6,164.6 274.0,163.8 273.4,164.5 272.8,163.1 272.2,163.7 271.6,164.2 271.0,163.7 270.4,162.0 269.8,164.3 269.2,162.2 268.6,163.5 268.0,163.0 267.4,164.0 266.8,164.2 266.2,162.5 265.6,163.9 265.0,164.4 264.4,164.0 263.8,162.7 263.2,163.1 262.6,163.3 262.0,164.1 261.4,165.1 260.8,164.4 260.2,164.7 259.6,164.9 259.0,164.9 258.4,164.4 257.8,164.5 257.2,163.7 256.6,163.9 256.0,164.8 255.4,165.3 254.8,165.6 254.2,164.2 253.6,163.9 253.0,165.7 252.4,165.1 251.8,165.0 251.2,165.7 250.6,165.9 250.0,166.3 249.4,166.7 248.8,165.4 248.2,167.5 247.6,165.5 247.0,165.7 246.4,167.5 245.8,165.6 245.2,165.9 244.6,165.8 244.0,166.6 243.4,167.7 242.8,166.5 242.2,166.9 241.6,167.7 241.0,167.7 240.4,167.8 239.8,168.6 239.2,167.0 238.6,166.5 238.0,168.8 237.4,166.3 236.8,168.6 236.2,168.9 235.6,168.1 235.0,168.2 234.4,167.5 233.8,168.3 233.2,169.1 232.6,168.6 232.0,167.6 231.4,167.1 230.8,168.5 230.2,169.3 229.6,168.6 229.0,169.5 228.4,168.1 227.8,169.4 227.2,168.2 226.6,170.4 226.0,169.0 225.4,170.0 224.8,169.9 224.2,168.4 223.6,168.8 223.0,168.9 222.4,169.6 221.8,169.4 221.2,168.2 220.6,168.7 220.0,168.0 219.4,168.6 218.8,168.5 218.2,168.9 217.6,169.2 217.0,170.1 216.4,170.4 215.8,169.6 215.2,169.8 214.6,169.4 214.0,170.9 213.4,169.7 212.8,170.9 212.2,170.4 211.6,170.5 211.0,169.6 210.4,169.7 209.8,170.0 209.2,169.3 208.6,169.2 208.0,170.1 207.4,170.7 206.8,169.9 206.2,170.3 205.6,170.1 205.0,172.2 204.4,171.8 203.8,172.3 203.2,172.2 202.6,172.7 202.0,173.1 201.4,171.2 200.8,171.9 200.2,172.7 199.6,172.3 199.0,173.6 198.4,172.2 197.8,174.0 197.2,172.0 196.6,172.9 196.0,175.1 195.4,174.1 194.8,175.6 194.2,174.0 193.6,175.1 193.0,175.9 192.4,174.8 191.8,176.8 191.2,177.7 190.6,176.2 190.0,176.8 189.4,179.1 188.8,179.4 188.2,179.4 187.6,180.3 187.0,180.1 186.4,179.2 185.8,181.1 185.2,181.9 184.6,180.7 184.0,180.9 183.4,182.2 182.8,183.3 182.2,183.5 181.6,182.5 181.0,183.9 180.4,183.2 179.8,183.8 179.2,183.9 178.6,186.5 178.0,186.2 177.4,187.2 176.8,185.8 176.2,186.4 175.6,187.1 175.0,189.0 174.4,189.3 173.8,190.3 173.2,189.6 172.6,193.1 172.0,193.2 171.4,193.0 170.8,194.4 170.2,196.2 169.6,197.4 169.0,199.4 168.4,200.3 167.8,200.9 167.2,202.5 166.6,204.3 166.0,204.0 165.4,206.9 164.8,208.4 164.2,209.7 163.6,210.8 163.0,212.4 162.4,211.6 161.8,214.6 161.2,214.6 160.6,215.7 160.0,217.7 159.4,217.9 158.8,219.1 158.2,220.9 157.6,221.7 157.0,223.3 156.4,225.0 155.8,225.0 155.2,226.4 154.6,228.0 154.0,229.1 153.4,230.6 152.8,232.0 152.2,233.2 151.6,233.7 151.0,234.4 150.4,236.5 149.8,237.3 149.2,238.8 148.6,240.1 148.0,241.3 147.4,241.8 146.8,243.6 146.2,245.1 145.6,246.1 145.0,246.8 144.4,248.1 143.8,249.4 143.2,250.2 142.6,250.9 142.0,251.5 141.4,251.7 140.8,252.2 140.2,252.2 139.6,252.2 139.0,252.7 138.4,252.9 137.8,253.1 137.2,252.8 136.6,252.8 136.0,253.1 135.4,253.3 134.8,253.0 134.2,253.0 133.6,253.2 133.0,253.4 132.4,253.3 131.8,253.3 131.2,253.3 130.6,253.4 130.0,253.4 129.4,253.2 128.8,253.5 128.2,253.2 127.6,253.5 127.0,253.3 126.4,253.0 125.8,253.0 125.2,253.5 124.6,253.5 124.0,253.1 123.4,253.2 122.8,253.3 122.2,253.2 121.6,253.5 121.0,253.0 120.4,253.3 119.8,253.3 119.2,253.3 118.6,253.4 118.0,253.1 117.4,253.1 116.8,253.3 116.2,253.7 115.6,253.3 115.0,253.3 114.4,253.5 113.8,253.5 113.2,253.4 112.6,253.3 112.0,253.3 111.4,253.7 110.8,253.6 110.2,253.4 109.6,253.1 109.0,253.7 108.4,253.2 107.8,253.4 107.2,253.1 106.6,253.4 106.0,253.2 105.4,253.4 104.8,253.1 104.2,253.4 103.6,253.3 103.0,253.3 102.4,253.4 101.8,253.2 101.2,253.4 100.6,253.4 100.0,253.4 99.4,253.1 98.8,253.5 98.2,253.6 97.6,253.1 97.0,253.2 96.4,253.1 95.8,253.0 95.2,253.1 94.6,253.0 94.0,253.1 93.4,253.2 92.8,253.3 92.2,253.4 91.6,252.7 91.0,253.2 90.4,252.8 89.8,252.8 89.2,253.1 88.6,253.0 88.0,253.1 87.4,252.7 86.8,252.7 86.2,252.9 85.6,252.6 85.0,252.5 84.4,252.5 83.8,252.6 83.2,252.5 82.6,252.8 82.0,252.5 81.4,252.7 80.8,252.3 80.2,252.6 79.6,252.6 79.0,252.7 78.4,252.2 77.8,252.5 77.2,252.6 76.6,252.2 76.0,252.4 75.4,252.4 74.8,252.4 74.2,252.5 73.6,252.5 73.0,252.4 72.4,252.3 71.8,252.0 71.2,252.4 70.6,252.3 70.0,252.2 69.4,251.9 68.8,252.3 68.2,252.2 67.6,252.0 67.0,252.1 66.4,252.3 65.8,251.8 65.2,252.1 64.6,252.2 64.0,252.1 63.4,251.7 62.8,252.1 62.2,251.9 61.6,252.0 61.0,251.7 60.4,251.9 59.8,251.9 59.2,251.9 58.6,251.8 58.0,251.8 57.4,251.6 56.8,251.8 56.2,251.9 55.6,251.7 55.0,251.8 54.4,251.4 53.8,251.6 53.2,251.7 52.6,251.4 52.0,251.7 51.4,251.5 50.8,251.6 50.2,251.8 49.6,251.6 49.0,251.3 48.4,251.3 47.8,251.5 47.2,251.6 46.6,251.3 46.0,251.5 45.4,251.5 44.8,251.5 44.2,251.1 43.6,251.1 43.0,251.3 42.4,251.4 41.8,251.2 41.2,251.1 40.6,251.3 40.0,251.1Z" fill="#22c83a" stroke="#22c83a" stroke-width="0.35"/>
<path d="M40.0,245.4 40.6,245.7 41.2,245.5 41.8,245.6 42.4,245.7 43.0,246.0 43.6,245.6 44.2,246.2 44.8,246.1 45.4,246.0 46.0,245.9 46.6,246.1 47.2,245.9 47.8,245.9 48.4,246.4 49.0,246.1 49.6,246.5 50.2,246.3 50.8,246.6 51.4,246.1 52.0,246.4 52.6,246.2 53.2,246.3 53.8,246.3 54.4,246.7 55.0,246.8 55.6,246.5 56.2,246.8 56.8,246.5 57.4,246.8 58.0,246.7 58.6,246.3 59.2,246.8 59.8,247.1 60.4,247.1 61.0,246.9 61.6,246.9 62.2,246.9 62.8,247.1 63.4,246.8 64.0,247.1 64.6,247.0 65.2,247.0 65.8,247.4 66.4,247.3 67.0,247.0 67.6,247.2 68.2,247.5 68.8,247.3 69.4,247.3 70.0,247.2 70.6,247.5 71.2,247.4 71.8,247.7 72.4,247.5 73.0,247.7 73.6,247.4 74.2,247.7 74.8,247.5 75.4,247.8 76.0,247.5 76.6,247.8 77.2,247.7 77.8,247.6 78.4,247.7 79.0,247.7 79.6,247.7 80.2,248.2 80.8,247.9 81.4,248.2 82.0,247.9 82.6,247.9 83.2,248.1 83.8,248.0 84.4,248.4 85.0,248.2 85.6,248.5 86.2,248.2 86.8,248.4 87.4,248.2 88.0,248.6 88.6,248.6 89.2,248.3 89.8,248.4 90.4,248.4 91.0,248.3 91.6,248.5 92.2,248.4 92.8,248.6 93.4,248.4 94.0,248.4 94.6,248.9 95.2,248.8 95.8,248.5 96.4,248.9 97.0,249.0 97.6,248.8 98.2,248.9 98.8,248.8 99.4,248.9 100.0,249.0 100.6,249.0 101.2,248.8 101.8,248.7 102.4,248.7 103.0,248.9 103.6,249.2 104.2,248.9 104.8,248.9 105.4,248.9 106.0,249.1 106.6,249.3 107.2,249.0 107.8,249.3 108.4,249.0 109.0,249.0 109.6,249.2 110.2,248.9 110.8,249.4 111.4,248.9 112.0,249.2 112.6,249.1 113.2,249.1 113.8,249.0 114.4,249.0 115.0,249.5 115.6,249.6 116.2,249.1 116.8,249.6 117.4,249.2 118.0,249.3 118.6,249.3 119.2,249.4 119.8,249.5 120.4,249.1 121.0,249.3 121.6,249.5 122.2,249.7 122.8,249.4 123.4,249.6 124.0,249.5 124.6,249.3 125.2,249.5 125.8,249.2 126.4,249.3 127.0,249.4 127.6,249.6 128.2,249.5 128.8,249.3 129.4,249.1 130.0,249.7 130.6,249.5 131.2,249.3 131.8,249.2 132.4,249.6 133.0,249.2 133.6,249.2 134.2,249.3 134.8,249.5 135.4,249.4 136.0,249.4 136.6,249.2 137.2,249.5 137.8,249.5 138.4,249.1 139.0,249.1 139.6,248.9 140.2,249.1 140.8,249.6 141.4,249.6 142.0,249.2 142.6,249.1 143.2,249.1 143.8,249.2 144.4,249.0 145.0,249.5 145.6,249.5 146.2,249.4 146.8,249.4 147.4,249.4 148.0,249.5 148.6,249.3 149.2,249.5 149.8,249.2 150.4,249.0 151.0,249.2 151.6,249.0 152.2,249.1 152.8,248.9 153.4,249.0 154.0,248.9 154.6,249.1 155.2,248.7 155.8,248.9 156.4,249.0 157.0,248.8 157.6,248.8 158.2,248.6 158.8,248.6 159.4,249.0 160.0,248.9 160.6,249.0 161.2,248.5 161.8,248.8 162.4,248.7 163.0,248.7 163.6,248.8 164.2,248.4 164.8,248.6 165.4,248.5 166.0,248.6 166.6,248.4 167.2,248.1 167.8,248.4 168.4,248.1 169.0,248.6 169.6,248.2 170.2,248.1 170.8,247.7 171.4,247.8 172.0,247.9 172.6,247.7 173.2,247.5 173.8,247.5 174.4,247.3 175.0,247.2 175.6,247.4 176.2,247.2 176.8,247.3 177.4,247.2 178.0,246.8 178.6,246.9 179.2,247.0 179.8,247.0 180.4,246.8 181.0,246.8 181.6,246.6 182.2,246.4 182.8,246.4 183.4,245.7 184.0,245.5 184.6,244.9 185.2,243.8 185.8,243.3 186.4,242.1 187.0,240.6 187.6,238.1 188.2,237.5 188.8,235.5 189.4,233.2 190.0,231.9 190.6,231.1 191.2,228.2 191.8,227.3 192.4,226.1 193.0,224.3 193.6,222.4 194.2,221.9 194.8,219.5 195.4,218.3 196.0,217.2 196.6,216.1 197.2,215.3 197.8,214.4 198.4,212.1 199.0,211.2 199.6,209.2 200.2,209.3 200.8,207.7 201.4,206.0 202.0,206.1 202.6,204.1 203.2,201.8 203.8,202.4 204.4,201.0 205.0,199.4 205.6,198.7 206.2,196.5 206.8,195.4 207.4,194.4 208.0,194.3 208.6,193.8 209.2,191.6 209.8,191.2 210.4,190.0 211.0,188.6 211.6,186.6 212.2,186.2 212.8,187.1 213.4,184.0 214.0,183.6 214.6,183.7 215.2,181.5 215.8,181.3 216.4,180.0 217.0,179.0 217.6,179.3 218.2,177.7 218.8,176.5 219.4,176.7 220.0,172.7 220.6,174.0 221.2,172.5 221.8,169.9 222.4,169.1 223.0,170.0 223.6,167.5 224.2,166.8 224.8,167.3 225.4,162.5 226.0,164.3 226.6,164.0 227.2,160.3 227.8,160.3 228.4,161.0 229.0,157.8 229.6,155.9 230.2,157.6 230.8,154.0 231.4,154.4 232.0,152.5 232.6,152.9 233.2,149.7 233.8,147.0 234.4,148.5 235.0,148.4 235.6,144.0 236.2,142.4 236.8,143.2 237.4,140.3 238.0,139.2 238.6,138.8 239.2,137.2 239.8,139.1 240.4,134.9 241.0,135.7 241.6,135.2 242.2,132.8 242.8,130.3 243.4,129.8 244.0,131.8 244.6,129.7 245.2,128.7 245.8,125.2 246.4,123.4 247.0,124.4 247.6,124.8 248.2,121.6 248.8,123.3 249.4,122.7 250.0,118.8 250.6,119.1 251.2,117.7 251.8,118.6 252.4,115.5 253.0,113.8 253.6,110.7 254.2,114.8 254.8,111.1 255.4,110.2 256.0,108.4 256.6,106.1 257.2,107.0 257.8,105.5 258.4,104.8 259.0,102.1 259.6,100.4 260.2,102.6 260.8,98.8 261.4,98.7 262.0,99.3 262.6,95.9 263.2,95.6 263.8,95.9 264.4,92.9 265.0,91.8 265.6,92.8 266.2,92.2 266.8,93.0 267.4,90.4 268.0,89.6 268.6,92.1 269.2,91.7 269.8,89.6 270.4,91.4 271.0,92.3 271.6,91.2 272.2,89.2 272.8,90.1 273.4,89.7 274.0,89.5 274.6,90.0 275.2,87.7 275.8,88.9 276.4,88.3 277.0,89.6 277.6,89.2 278.2,88.8 278.8,88.8 279.4,91.8 280.0,92.0 280.6,93.6 281.2,93.5 281.8,89.3 282.4,91.8 283.0,93.6 283.6,93.8 284.2,91.6 284.8,91.4 285.4,90.6 286.0,91.3 286.6,93.0 287.2,91.4 287.8,93.9 288.4,93.2 289.0,94.3 289.6,91.7 290.2,92.5 290.8,93.0 291.4,93.0 292.0,91.2 292.6,93.4 293.2,91.1 293.8,94.1 294.4,91.3 295.0,92.0 295.6,94.7 296.2,93.8 296.8,92.0 297.4,94.1 298.0,93.3 298.6,95.1 299.2,91.1 299.8,91.7 300.4,94.4 301.0,91.6 301.6,92.1 302.2,95.0 302.8,94.3 303.4,92.6 304.0,92.3 304.6,93.9 305.2,94.9 305.8,93.2 306.4,90.4 307.0,91.8 307.6,94.6 308.2,94.2 308.8,92.1 309.4,93.5 310.0,92.1 310.6,94.9 311.2,92.6 311.8,92.2 312.4,91.8 313.0,94.6 313.6,91.8 314.2,93.4 314.8,94.8 315.4,96.0 316.0,93.2 316.6,91.9 317.2,93.7 317.8,94.3 318.4,94.9 319.0,94.2 319.6,92.0 320.2,94.7 320.8,94.9 321.4,94.5 322.0,95.9 322.6,95.7 323.2,91.7 323.8,93.0 324.4,95.6 325.0,93.6 325.6,93.3 326.2,94.3 326.8,95.6 327.4,93.3 328.0,93.8 328.6,95.9 329.2,97.4 329.8,94.5 330.4,92.8 331.0,95.6 331.6,95.2 332.2,99.2 332.8,96.5 333.4,94.7 334.0,98.6 334.6,99.6 335.2,96.3 335.8,97.1 336.4,99.5 337.0,96.9 337.6,100.8 338.2,100.6 338.8,99.2 339.4,99.1 340.0,98.8 340.6,100.3 341.2,99.9 341.8,103.2 342.4,101.0 343.0,98.8 343.6,100.7 344.2,101.1 344.8,101.5 345.4,103.8 346.0,104.8 346.6,103.6 347.2,103.0 347.8,107.0 348.4,106.2 349.0,105.1 349.6,107.8 350.2,108.1 350.8,106.4 351.4,107.1 352.0,107.4 352.6,106.5 353.2,107.7 353.8,110.1 354.4,106.3 355.0,109.7 355.6,111.1 356.2,109.4 356.8,107.9 357.4,107.8 358.0,111.5 358.6,112.2 359.2,109.1 359.8,109.1 360.4,109.2 361.0,110.0 361.6,110.0 362.2,110.4 362.8,113.3 363.4,113.6 364.0,113.0 364.6,113.9 365.2,110.9 365.8,111.0 366.4,112.7 367.0,114.2 367.6,115.4 368.2,112.3 368.8,112.5 369.4,114.2 370.0,113.8 370.6,114.6 371.2,114.4 371.8,111.9 372.4,116.0 373.0,117.8 373.6,118.0 374.2,115.8 374.8,118.6 375.4,118.6 376.0,115.6 376.6,115.6 377.2,119.3 377.8,118.8 378.4,116.1 379.0,116.6 379.6,118.1 380.2,117.8 380.8,117.9 381.4,118.1 382.0,117.6 382.6,118.7 383.2,119.5 383.8,121.9 384.4,119.6 385.0,122.3 385.6,122.4 386.2,119.7 386.8,121.1 387.4,121.4 388.0,121.1 388.6,120.7 389.2,120.5 389.8,124.3 390.4,124.3 391.0,124.7 391.6,120.9 392.2,123.4 392.8,124.3 393.4,123.6 394.0,125.2 394.6,123.5 395.2,125.5 395.8,124.3 396.4,126.6 397.0,122.1 397.6,127.5 398.2,127.5 398.8,127.5 399.4,123.1 400.0,127.6 400.6,126.2 401.2,126.5 401.8,127.9 402.4,128.5 403.0,127.0 403.6,129.8 404.2,130.3 404.8,127.8 405.4,129.6 406.0,130.9 406.6,131.0 407.2,129.7 407.8,128.2 408.4,128.8 409.0,131.7 409.6,131.1 410.2,130.3 410.8,132.9 411.4,132.7 412.0,133.5 412.6,132.3 413.2,132.3 413.8,131.4 414.4,134.9 415.0,134.8 415.6,134.6 416.2,134.4 416.8,135.1 417.4,132.8 418.0,135.6 418.6,133.8 419.2,133.8 419.8,136.8 420.4,137.6 421.0,135.3 421.6,138.6 422.2,138.7 422.8,138.7 423.4,139.4 424.0,137.8 424.6,139.2 425.2,139.8 425.8,139.1 426.4,139.0 427.0,141.4 427.6,140.2 428.2,139.2 428.8,142.7 429.4,141.5 430.0,142.2 430.6,143.6 431.2,142.1 431.8,144.2 432.4,142.4 433.0,143.3 433.6,142.4 434.2,143.2 434.8,143.1 435.4,145.2 436.0,145.1 436.6,145.0 437.2,145.0 437.8,146.7 438.4,147.9 439.0,145.9 439.6,146.0 440.2,145.9 440.8,147.2 441.4,146.8 442.0,149.2 442.6,148.1 443.2,149.0 443.8,149.5 444.4,149.8 445.0,149.1 445.6,148.7 446.2,150.0 446.8,149.6 447.4,150.4 448.0,150.3 448.6,150.9 449.2,152.7 449.8,150.6 450.4,151.9 451.0,153.0 451.6,152.3 452.2,152.2 452.8,151.7 453.4,154.4 454.0,155.0 454.6,153.4 455.2,152.6 455.8,153.5 456.4,155.5 457.0,153.9 457.6,156.4 458.2,156.3 458.8,156.4 459.4,157.0 460.0,157.4 460.6,155.7 461.2,154.9 461.8,156.9 462.4,157.0 463.0,157.7 463.6,158.0 464.2,156.8 464.8,157.3 465.4,157.6 466.0,156.6 466.6,159.0 467.2,158.2 467.8,159.1 468.4,158.3 469.0,159.5 469.6,158.3 L469.6,162.6 469.0,161.6 468.4,163.2 467.8,162.3 467.2,163.3 466.6,162.7 466.0,160.8 465.4,160.0 464.8,162.4 464.2,160.5 463.6,162.1 463.0,160.8 462.4,160.2 461.8,162.2 461.2,160.1 460.6,161.1 460.0,160.1 459.4,158.0 458.8,160.2 458.2,160.2 457.6,158.9 457.0,159.6 456.4,158.6 455.8,158.3 455.2,156.4 454.6,158.2 454.0,158.0 453.4,156.0 452.8,158.2 452.2,156.0 451.6,157.1 451.0,157.1 450.4,157.5 449.8,155.5 449.2,156.7 448.6,154.9 448.0,153.6 447.4,154.3 446.8,154.1 446.2,154.4 445.6,153.4 445.0,153.9 444.4,154.5 443.8,152.0 443.2,151.1 442.6,153.8 442.0,151.8 441.4,151.3 440.8,152.9 440.2,151.0 439.6,151.9 439.0,152.2 438.4,150.5 437.8,149.2 437.2,148.6 436.6,148.4 436.0,150.3 435.4,150.0 434.8,148.8 434.2,148.3 433.6,146.3 433.0,148.7 432.4,146.0 431.8,147.7 431.2,147.6 430.6,147.7 430.0,146.9 429.4,144.7 428.8,143.7 428.2,145.6 427.6,143.4 427.0,143.7 426.4,143.8 425.8,142.7 425.2,142.4 424.6,141.6 424.0,141.5 423.4,143.0 422.8,143.1 422.2,140.1 421.6,143.1 421.0,139.5 420.4,140.1 419.8,139.6 419.2,140.9 418.6,139.6 418.0,139.2 417.4,139.7 416.8,137.2 416.2,137.7 415.6,137.4 415.0,138.0 414.4,136.3 413.8,138.9 413.2,136.6 412.6,136.1 412.0,136.8 411.4,137.8 410.8,137.5 410.2,137.3 409.6,135.1 409.0,133.7 408.4,136.2 407.8,136.0 407.2,133.3 406.6,136.0 406.0,132.4 405.4,131.8 404.8,133.0 404.2,134.4 403.6,132.2 403.0,132.5 402.4,132.7 401.8,133.3 401.2,131.8 400.6,131.8 400.0,131.4 399.4,130.0 398.8,132.7 398.2,129.5 397.6,131.1 397.0,130.6 396.4,128.1 395.8,131.4 395.2,129.4 394.6,128.1 394.0,130.5 393.4,129.3 392.8,127.1 392.2,126.9 391.6,128.7 391.0,127.2 390.4,128.2 389.8,127.9 389.2,126.4 388.6,127.6 388.0,127.6 387.4,125.9 386.8,127.1 386.2,127.6 385.6,126.8 385.0,126.2 384.4,125.1 383.8,125.9 383.2,125.1 382.6,124.3 382.0,125.3 381.4,123.5 380.8,123.7 380.2,122.7 379.6,123.4 379.0,121.3 378.4,122.9 377.8,123.8 377.2,121.1 376.6,121.7 376.0,123.6 375.4,121.4 374.8,123.6 374.2,123.1 373.6,121.0 373.0,119.6 372.4,121.8 371.8,121.6 371.2,120.9 370.6,119.8 370.0,119.8 369.4,118.7 368.8,120.0 368.2,117.6 367.6,117.3 367.0,120.2 366.4,120.3 365.8,119.0 365.2,120.6 364.6,116.1 364.0,115.8 363.4,117.0 362.8,117.3 362.2,116.4 361.6,117.0 361.0,116.4 360.4,116.3 359.8,114.2 359.2,117.9 358.6,113.4 358.0,115.1 357.4,113.1 356.8,112.9 356.2,115.9 355.6,115.9 355.0,113.4 354.4,114.6 353.8,111.9 353.2,111.3 352.6,112.1 352.0,112.6 351.4,111.9 350.8,110.4 350.2,113.2 349.6,109.6 349.0,110.9 348.4,108.6 347.8,111.0 347.2,107.7 346.6,109.4 346.0,108.6 345.4,110.6 344.8,107.7 344.2,110.6 343.6,109.8 343.0,106.8 342.4,106.9 341.8,105.0 341.2,105.4 340.6,107.8 340.0,108.6 339.4,105.7 338.8,104.9 338.2,103.3 337.6,107.4 337.0,107.1 336.4,105.8 335.8,103.3 335.2,104.2 334.6,103.6 334.0,103.7 333.4,102.0 332.8,102.8 332.2,104.8 331.6,103.6 331.0,100.5 330.4,100.3 329.8,100.4 329.2,101.1 328.6,100.7 328.0,100.6 327.4,102.0 326.8,103.1 326.2,101.0 325.6,101.4 325.0,98.2 324.4,100.0 323.8,98.9 323.2,99.3 322.6,102.2 322.0,98.8 321.4,101.6 320.8,98.3 320.2,98.0 319.6,101.2 319.0,98.1 318.4,97.6 317.8,98.7 317.2,98.2 316.6,98.5 316.0,101.6 315.4,100.3 314.8,98.5 314.2,98.2 313.6,99.2 313.0,100.3 312.4,100.0 311.8,100.3 311.2,97.6 310.6,96.9 310.0,100.5 309.4,98.9 308.8,96.7 308.2,100.7 307.6,96.5 307.0,101.7 306.4,100.0 305.8,97.4 305.2,100.8 304.6,98.6 304.0,98.1 303.4,100.8 302.8,100.7 302.2,97.8 301.6,100.5 301.0,99.1 300.4,100.6 299.8,98.5 299.2,100.5 298.6,99.8 298.0,100.8 297.4,96.9 296.8,100.4 296.2,98.8 295.6,96.9 295.0,97.2 294.4,96.4 293.8,100.4 293.2,97.3 292.6,97.8 292.0,100.6 291.4,97.6 290.8,102.0 290.2,100.7 289.6,99.5 289.0,96.7 288.4,98.4 287.8,99.8 287.2,97.6 286.6,95.6 286.0,101.0 285.4,97.7 284.8,99.8 284.2,98.4 283.6,98.7 283.0,99.5 282.4,96.4 281.8,98.9 281.2,95.0 280.6,96.4 280.0,98.1 279.4,96.1 278.8,96.1 278.2,97.7 277.6,98.4 277.0,98.4 276.4,95.8 275.8,98.1 275.2,95.9 274.6,96.6 274.0,94.7 273.4,97.0 272.8,95.8 272.2,98.8 271.6,93.7 271.0,97.7 270.4,98.1 269.8,97.3 269.2,99.8 268.6,97.6 268.0,97.4 267.4,96.2 266.8,98.5 266.2,98.5 265.6,97.8 265.0,102.2 264.4,103.4 263.8,103.2 263.2,106.1 262.6,104.7 262.0,105.7 261.4,104.5 260.8,104.8 260.2,109.4 259.6,111.5 259.0,112.3 258.4,112.5 257.8,113.8 257.2,115.4 256.6,115.2 256.0,117.9 255.4,117.2 254.8,118.4 254.2,118.8 253.6,117.8 253.0,118.0 252.4,121.3 251.8,121.8 251.2,124.6 250.6,122.0 250.0,124.1 249.4,126.5 248.8,126.2 248.2,130.6 247.6,127.8 247.0,128.5 246.4,131.5 245.8,130.6 245.2,132.3 244.6,132.1 244.0,135.8 243.4,135.9 242.8,137.3 242.2,138.1 241.6,137.6 241.0,140.9 240.4,143.2 239.8,144.5 239.2,143.3 238.6,146.0 238.0,147.4 237.4,148.2 236.8,151.0 236.2,150.9 235.6,150.9 235.0,152.5 234.4,154.4 233.8,155.6 233.2,153.3 232.6,154.3 232.0,157.0 231.4,159.8 230.8,160.2 230.2,160.3 229.6,161.6 229.0,163.5 228.4,163.8 227.8,163.8 227.2,164.4 226.6,166.2 226.0,169.4 225.4,167.3 224.8,170.5 224.2,172.7 223.6,171.7 223.0,172.9 222.4,175.9 221.8,173.8 221.2,177.3 220.6,176.1 220.0,177.3 219.4,179.5 218.8,178.8 218.2,180.4 217.6,183.2 217.0,182.4 216.4,183.3 215.8,185.7 215.2,186.7 214.6,185.1 214.0,187.3 213.4,189.7 212.8,189.2 212.2,189.6 211.6,192.5 211.0,193.5 210.4,193.4 209.8,194.5 209.2,194.8 208.6,195.3 208.0,198.0 207.4,198.2 206.8,199.1 206.2,201.1 205.6,200.9 205.0,202.7 204.4,203.8 203.8,205.6 203.2,205.1 202.6,206.3 202.0,206.9 201.4,209.0 200.8,210.8 200.2,210.7 199.6,213.1 199.0,213.0 198.4,214.8 197.8,215.6 197.2,216.4 196.6,217.5 196.0,219.5 195.4,222.0 194.8,221.0 194.2,223.0 193.6,223.8 193.0,226.2 192.4,227.8 191.8,229.5 191.2,230.8 190.6,232.7 190.0,233.4 189.4,235.4 188.8,236.2 188.2,239.1 187.6,239.9 187.0,241.0 186.4,242.5 185.8,243.9 185.2,244.7 184.6,245.4 184.0,246.0 183.4,246.6 182.8,246.9 182.2,246.9 181.6,247.4 181.0,247.5 180.4,247.6 179.8,247.2 179.2,247.3 178.6,247.7 178.0,247.6 177.4,247.6 176.8,248.3 176.2,248.2 175.6,248.1 175.0,248.4 174.4,248.3 173.8,248.4 173.2,248.5 172.6,248.7 172.0,248.5 171.4,248.9 170.8,248.7 170.2,249.1 169.6,249.0 169.0,248.8 168.4,249.0 167.8,249.1 167.2,248.9 166.6,249.0 166.0,248.9 165.4,249.3 164.8,249.3 164.2,249.7 163.6,249.4 163.0,249.5 162.4,249.2 161.8,249.1 161.2,249.4 160.6,249.6 160.0,249.2 159.4,249.5 158.8,249.2 158.2,249.7 157.6,249.9 157.0,249.8 156.4,249.8 155.8,249.9 155.2,249.9 154.6,249.8 154.0,249.9 153.4,249.9 152.8,249.9 152.2,250.0 151.6,250.0 151.0,249.8 150.4,249.7 149.8,249.9 149.2,249.9 148.6,250.1 148.0,250.2 147.4,249.9 146.8,249.9 146.2,249.8 145.6,249.8 145.0,250.1 144.4,250.0 143.8,250.1 143.2,250.2 142.6,250.4 142.0,250.0 141.4,249.7 140.8,249.9 140.2,249.8 139.6,250.1 139.0,250.0 138.4,250.1 137.8,250.1 137.2,250.2 136.6,250.1 136.0,249.9 135.4,250.1 134.8,250.0 134.2,250.1 133.6,250.3 133.0,249.8 132.4,250.0 131.8,250.3 131.2,250.0 130.6,250.1 130.0,249.8 129.4,250.3 128.8,250.2 128.2,249.9 127.6,250.0 127.0,250.2 126.4,249.8 125.8,250.1 125.2,250.0 124.6,249.9 124.0,250.4 123.4,250.1 122.8,250.3 122.2,250.2 121.6,250.3 121.0,249.9 120.4,250.0 119.8,249.9 119.2,250.1 118.6,250.2 118.0,250.3 117.4,250.2 116.8,250.2 116.2,250.0 115.6,250.0 115.0,250.1 114.4,250.2 113.8,250.1 113.2,250.1 112.6,250.1 112.0,250.1 111.4,249.8 110.8,250.0 110.2,249.7 109.6,250.1 109.0,249.7 108.4,249.9 107.8,249.8 107.2,249.6 106.6,249.7 106.0,249.6 105.4,249.7 104.8,249.9 104.2,249.9 103.6,249.8 103.0,249.8 102.4,249.8 101.8,249.4 101.2,249.8 100.6,249.5 100.0,249.5 99.4,249.5 98.8,249.7 98.2,249.6 97.6,249.8 97.0,249.6 96.4,249.3 95.8,249.7 95.2,249.6 94.6,249.3 94.0,249.6 93.4,249.5 92.8,249.2 92.2,249.0 91.6,249.0 91.0,249.1 90.4,248.9 89.8,249.1 89.2,249.2 88.6,248.9 88.0,249.3 87.4,249.1 86.8,249.1 86.2,248.9 85.6,249.0 85.0,249.2 84.4,248.7 83.8,249.1 83.2,248.6 82.6,248.9 82.0,248.5 81.4,248.5 80.8,248.8 80.2,248.9 79.6,248.8 79.0,248.6 78.4,248.3 77.8,248.7 77.2,248.3 76.6,248.5 76.0,248.2 75.4,248.4 74.8,248.1 74.2,248.3 73.6,248.4 73.0,248.2 72.4,248.1 71.8,248.3 71.2,248.0 70.6,248.2 70.0,248.2 69.4,248.1 68.8,247.9 68.2,247.7 67.6,248.0 67.0,248.0 66.4,248.1 65.8,247.9 65.2,247.6 64.6,247.7 64.0,247.8 63.4,247.6 62.8,247.8 62.2,247.7 61.6,247.3 61.0,247.5 60.4,247.5 59.8,247.5 59.2,247.6 58.6,247.7 58.0,247.4 57.4,247.1 56.8,247.4 56.2,247.7 55.6,247.5 55.0,247.0 54.4,247.1 53.8,247.0 53.2,247.1 52.6,247.2 52.0,247.0 51.4,246.9 50.8,247.1 50.2,246.9 49.6,247.2 49.0,246.6 48.4,246.6 47.8,246.8 47.2,246.9 46.6,246.8 46.0,246.7 45.4,246.8 44.8,246.7 44.2,246.4 43.6,246.7 43.0,246.4 42.4,246.5 41.8,246.6 41.2,246.2 40.6,246.6 40.0,246.2Z" fill="#ffff28" stroke="#ffff28" stroke-width="0.35"/>
<rect x="96.7" y="243.5" width="3.6" height="3.6" fill="none" stroke="#d8d8d8" stroke-width="0.6" opacity="0.8"/>
<rect x="96.7" y="251.1" width="3.6" height="3.6" fill="none" stroke="#d8d8d8" stroke-width="0.6" opacity="0.8"/>
<rect x="132.4" y="238.5" width="3.6" height="3.6" fill="none" stroke="#d8d8d8" stroke-width="0.6" opacity="0.8"/>
<rect x="138.7" y="245.5" width="3.6" height="3.6" fill="none" stroke="#d8d8d8" stroke-width="0.6" opacity="0.8"/>
<rect x="142.5" y="248.6" width="3.6" height="3.6" fill="none" stroke="#d8d8d8" stroke-width="0.6" opacity="0.8"/>
<rect x="181.9" y="244.2" width="3.6" height="3.6" fill="none" stroke="#d8d8d8" stroke-width="0.6" opacity="0.8"/>
<path d="M98.6,261.6 l3,5.8 h-6 z" fill="#16e028"/>
<path d="M281.8,261.6 l3,5.8 h-6 z" fill="#16e028"/>
</svg>
<div style="left:485px;top:71.1px;width:9.2px;height:9px;background:#f8f7f1;border:1px solid;border-color:#55534a #f4f3ec #f4f3ec #55534a"><svg width="8" height="8" style="left:-0.5px;top:-0.5px"><path d="M1.3,3.8 L3.1,6.3 L7.5,1.3" stroke="#111" stroke-width="0.95" fill="none"/></svg></div>
<div style="left:570.8px;top:71.2px;width:23.2px;height:8.8px;background:#000"></div>
<div style="left:573.0px;top:75.1px;width:19.0px;height:1.0px;background:#7c1616"></div>
<div style="left:485px;top:83.5px;width:9.2px;height:9px;background:#f8f7f1;border:1px solid;border-color:#55534a #f4f3ec #f4f3ec #55534a"><svg width="8" height="8" style="left:-0.5px;top:-0.5px"><path d="M1.3,3.8 L3.1,6.3 L7.5,1.3" stroke="#111" stroke-width="0.95" fill="none"/></svg></div>
<div style="left:570.8px;top:83.6px;width:23.2px;height:8.8px;background:#000"></div>
<div style="left:573.0px;top:87.5px;width:19.0px;height:1.0px;background:#1c6c78"></div>
<div style="left:485px;top:95.9px;width:9.2px;height:9px;background:#f8f7f1;border:1px solid;border-color:#55534a #f4f3ec #f4f3ec #55534a"><svg width="8" height="8" style="left:-0.5px;top:-0.5px"><path d="M1.3,3.8 L3.1,6.3 L7.5,1.3" stroke="#111" stroke-width="0.95" fill="none"/></svg></div>
<div style="left:570.8px;top:96.0px;width:23.2px;height:8.8px;background:#000"></div>
<div style="left:573.0px;top:99.9px;width:19.0px;height:1.0px;background:#1c7e26"></div>
<div style="left:485px;top:108.3px;width:9.2px;height:9px;background:#f8f7f1;border:1px solid;border-color:#55534a #f4f3ec #f4f3ec #55534a"><svg width="8" height="8" style="left:-0.5px;top:-0.5px"><path d="M1.3,3.8 L3.1,6.3 L7.5,1.3" stroke="#111" stroke-width="0.95" fill="none"/></svg></div>
<div style="left:570.8px;top:108.4px;width:23.2px;height:8.8px;background:#000"></div>
<div style="left:573.0px;top:112.3px;width:19.0px;height:1.0px;background:#8a8440"></div>
<div style="left:3.8px;top:281.6px;width:477.2px;height:11.4px;background:#efede1;"></div>
<div style="left:3.8px;top:292.6px;width:593.2px;height:1.0px;background:#fbfaf6;"></div>
<div style="left:3.8px;top:282px;width:9.9px;height:10.6px;background:#f1efe4;border-right:0.9px solid #7a786c"><svg width="9" height="10" style="left:0;top:0"><path d="M5.2,3.6 L3.2,5.4 L5.2,7.2 z" fill="#000"/></svg></div>
<div style="left:470.2px;top:282px;width:10.1px;height:10.6px;background:#f1efe4;border-left:0.8px solid #8f8d7e;border-right:0.9px solid #7a786c"><svg width="9" height="10" style="left:0;top:0"><path d="M3.9,3.6 L5.9,5.4 L3.9,7.2 z" fill="#000"/></svg></div>
<div style="left:484.1px;top:282.4px;width:9.8px;height:10.4px;border:1.2px solid;border-color:#1a1a1a #3a3a3a #ece9d8 #1a1a1a;background:#ece9d8"><svg width="9" height="9" style="left:-0.4px;top:-0.4px"><circle cx="3.8" cy="3.6" r="2.3" fill="#7ad8e4" stroke="#0a5068" stroke-width="1.1"/><path d="M5.4,5.4 l2.4,2.6" stroke="#083850" stroke-width="1.5"/><path d="M2.8,3.6 h2" stroke="#0a5068" stroke-width="0.7"/></svg></div>
<div style="left:496px;top:282.6px;width:9.6px;height:10px;background:#ece9d8"><svg width="10" height="10" style="left:0;top:0"><circle cx="4.4" cy="4.2" r="2.3" fill="#7ad8e4" stroke="#0a5068" stroke-width="1.1"/><path d="M6.0,6.0 l2.4,2.6" stroke="#083850" stroke-width="1.5"/><path d="M3.4,4.2 h2" stroke="#0a5068" stroke-width="0.7"/></svg></div>
<div class="btn" style="left:507.4px;top:282.6px;width:22.6px;height:9.8px"></div>
<div style="left:4.9px;top:294.0px;width:591.1px;height:98.7px;border:1px solid #9d9a8a;box-shadow:inset 0.8px 0.8px 0 #fff, 0.8px 0.8px 0 #fff;"></div>
<div class="sunk" style="left:100.5px;top:311.0px;width:30.3px;height:10.6px;background:#efede0"></div>
<div class="btn" style="left:121.5px;top:311.9px;width:9.1px;height:4.5px;box-shadow:none;border-color:#fff #77756a #77756a #fff"><svg width="8" height="4" style="left:-1px;top:-1px"><path d="M2.6,2.6 L4,1.4 L5.4,2.6" stroke="#55534a" stroke-width="0.7" fill="none"/></svg></div>
<div class="btn" style="left:121.5px;top:316.4px;width:9.1px;height:4.5px;box-shadow:none;border-color:#fff #77756a #77756a #fff"><svg width="8" height="4" style="left:-1px;top:-1px"><path d="M2.6,1.4 L4,2.6 L5.4,1.4" stroke="#55534a" stroke-width="0.7" fill="none"/></svg></div>
<div class="sunk" style="left:100.5px;top:326.3px;width:30.3px;height:10.6px;background:#fbfbf7"></div>
<div class="btn" style="left:121.5px;top:327.2px;width:9.1px;height:4.5px;box-shadow:none;border-color:#fff #77756a #77756a #fff"><svg width="8" height="4" style="left:-1px;top:-1px"><path d="M2.6,2.6 L4,1.4 L5.4,2.6" stroke="#55534a" stroke-width="0.7" fill="none"/></svg></div>
<div class="btn" style="left:121.5px;top:331.7px;width:9.1px;height:4.5px;box-shadow:none;border-color:#fff #77756a #77756a #fff"><svg width="8" height="4" style="left:-1px;top:-1px"><path d="M2.6,1.4 L4,2.6 L5.4,1.4" stroke="#55534a" stroke-width="0.7" fill="none"/></svg></div>
<div class="sunk" style="left:100.5px;top:341.8px;width:30.3px;height:10.6px;background:#efede0"></div>
<div class="sunk" style="left:100.5px;top:357.3px;width:30.3px;height:10.6px;background:#efede0"></div>
<div class="sunk" style="left:100.5px;top:372.6px;width:30.3px;height:10.6px;background:#efede0"></div>
<div class="sunk" style="left:180.1px;top:311.0px;width:30.3px;height:10.6px;background:#efede0"></div>
<div class="btn" style="left:201.1px;top:311.9px;width:9.1px;height:4.5px;box-shadow:none;border-color:#fff #77756a #77756a #fff"><svg width="8" height="4" style="left:-1px;top:-1px"><path d="M2.6,2.6 L4,1.4 L5.4,2.6" stroke="#55534a" stroke-width="0.7" fill="none"/></svg></div>
<div class="btn" style="left:201.1px;top:316.4px;width:9.1px;height:4.5px;box-shadow:none;border-color:#fff #77756a #77756a #fff"><svg width="8" height="4" style="left:-1px;top:-1px"><path d="M2.6,1.4 L4,2.6 L5.4,1.4" stroke="#55534a" stroke-width="0.7" fill="none"/></svg></div>
<div class="sunk" style="left:180.1px;top:326.3px;width:30.3px;height:10.6px;background:#fbfbf7"></div>
<div class="btn" style="left:201.1px;top:327.2px;width:9.1px;height:4.5px;box-shadow:none;border-color:#fff #77756a #77756a #fff"><svg width="8" height="4" style="left:-1px;top:-1px"><path d="M2.6,2.6 L4,1.4 L5.4,2.6" stroke="#55534a" stroke-width="0.7" fill="none"/></svg></div>
<div class="btn" style="left:201.1px;top:331.7px;width:9.1px;height:4.5px;box-shadow:none;border-color:#fff #77756a #77756a #fff"><svg width="8" height="4" style="left:-1px;top:-1px"><path d="M2.6,1.4 L4,2.6 L5.4,1.4" stroke="#55534a" stroke-width="0.7" fill="none"/></svg></div>
<div class="sunk" style="left:180.1px;top:341.8px;width:30.3px;height:10.6px;background:#efede0"></div>
<div class="sunk" style="left:180.1px;top:357.3px;width:30.3px;height:10.6px;background:#efede0"></div>
<div class="sunk" style="left:180.1px;top:372.6px;width:30.3px;height:10.6px;background:#efede0"></div>
<div class="sunk" style="left:261.1px;top:311.0px;width:30.2px;height:10.6px;background:#efede0"></div>
<div class="btn" style="left:282.0px;top:311.9px;width:9.1px;height:4.5px;box-shadow:none;border-color:#fff #77756a #77756a #fff"><svg width="8" height="4" style="left:-1px;top:-1px"><path d="M2.6,2.6 L4,1.4 L5.4,2.6" stroke="#55534a" stroke-width="0.7" fill="none"/></svg></div>
<div class="btn" style="left:282.0px;top:316.4px;width:9.1px;height:4.5px;box-shadow:none;border-color:#fff #77756a #77756a #fff"><svg width="8" height="4" style="left:-1px;top:-1px"><path d="M2.6,1.4 L4,2.6 L5.4,1.4" stroke="#55534a" stroke-width="0.7" fill="none"/></svg></div>
<div class="sunk" style="left:261.1px;top:326.3px;width:30.2px;height:10.6px;background:#fbfbf7"></div>
<div class="btn" style="left:282.0px;top:327.2px;width:9.1px;height:4.5px;box-shadow:none;border-color:#fff #77756a #77756a #fff"><svg width="8" height="4" style="left:-1px;top:-1px"><path d="M2.6,2.6 L4,1.4 L5.4,2.6" stroke="#55534a" stroke-width="0.7" fill="none"/></svg></div>
<div class="btn" style="left:282.0px;top:331.7px;width:9.1px;height:4.5px;box-shadow:none;border-color:#fff #77756a #77756a #fff"><svg width="8" height="4" style="left:-1px;top:-1px"><path d="M2.6,1.4 L4,2.6 L5.4,1.4" stroke="#55534a" stroke-width="0.7" fill="none"/></svg></div>
<div class="sunk" style="left:261.1px;top:341.8px;width:30.2px;height:10.6px;background:#efede0"></div>
<div class="sunk" style="left:261.1px;top:357.3px;width:30.2px;height:10.6px;background:#efede0"></div>
<div class="sunk" style="left:261.1px;top:372.6px;width:30.2px;height:10.6px;background:#efede0"></div>
<div class="sunk" style="left:342.1px;top:311.0px;width:30.2px;height:10.6px;background:#efede0"></div>
<div class="btn" style="left:363.0px;top:311.9px;width:9.1px;height:4.5px;box-shadow:none;border-color:#fff #77756a #77756a #fff"><svg width="8" height="4" style="left:-1px;top:-1px"><path d="M2.6,2.6 L4,1.4 L5.4,2.6" stroke="#55534a" stroke-width="0.7" fill="none"/></svg></div>
<div class="btn" style="left:363.0px;top:316.4px;width:9.1px;height:4.5px;box-shadow:none;border-color:#fff #77756a #77756a #fff"><svg width="8" height="4" style="left:-1px;top:-1px"><path d="M2.6,1.4 L4,2.6 L5.4,1.4" stroke="#55534a" stroke-width="0.7" fill="none"/></svg></div>
<div class="sunk" style="left:342.1px;top:326.3px;width:30.2px;height:10.6px;background:#fbfbf7"></div>
<div class="btn" style="left:363.0px;top:327.2px;width:9.1px;height:4.5px;box-shadow:none;border-color:#fff #77756a #77756a #fff"><svg width="8" height="4" style="left:-1px;top:-1px"><path d="M2.6,2.6 L4,1.4 L5.4,2.6" stroke="#55534a" stroke-width="0.7" fill="none"/></svg></div>
<div class="btn" style="left:363.0px;top:331.7px;width:9.1px;height:4.5px;box-shadow:none;border-color:#fff #77756a #77756a #fff"><svg width="8" height="4" style="left:-1px;top:-1px"><path d="M2.6,1.4 L4,2.6 L5.4,1.4" stroke="#55534a" stroke-width="0.7" fill="none"/></svg></div>
<div class="sunk" style="left:342.1px;top:341.8px;width:30.2px;height:10.6px;background:#efede0"></div>
<div class="sunk" style="left:342.1px;top:357.3px;width:30.2px;height:10.6px;background:#efede0"></div>
<div class="sunk" style="left:342.1px;top:372.6px;width:30.2px;height:10.6px;background:#efede0"></div>
<div class="btn" style="left:6.0px;top:395.8px;width:18.6px;height:17.5px"><svg width="18" height="18" viewBox="0 0 18 18" style="left:-1px;top:-1px"><path d="M3.4,6.4 L11.4,3 L15.2,10.2 L7.6,14 Z" fill="#f2ea68" stroke="#3a3410" stroke-width="0.9"/><path d="M13.6,10.8 L15.2,10.2 L14.4,8.8" fill="#1a1a1a"/><path d="M7,8.2 q1,-2 3.4,-1.6 M7.6,10.4 q2,0.4 3.6,-1.4" stroke="#b8a830" stroke-width="0.8" fill="none"/></svg></div>
<div class="btn" style="left:29.4px;top:395.8px;width:17.4px;height:17.5px"><svg width="18" height="18" viewBox="0 0 18 18" style="left:-1px;top:-1px"><path d="M5,3.6 H10.6 L13,5.8 V13.8 H5 Z" fill="#3a52c0" stroke="#1c2450" stroke-width="0.9"/><rect x="5.5" y="9.6" width="7" height="3.8" fill="#6cbc70"/><path d="M6.4,6.4 H9 M6.4,8 H11.6" stroke="#e6ecff" stroke-width="0.9"/></svg></div>
<div class="btn" style="left:47.6px;top:395.8px;width:17.8px;height:17.5px"><svg width="18" height="18" viewBox="0 0 18 18" style="left:-1px;top:-1px"><rect x="4.2" y="4" width="9.6" height="10" fill="#e4e1d5" stroke="#a9a697" stroke-width="0.9"/><rect x="7" y="2.6" width="4.2" height="2.6" fill="#c9c6b8" stroke="#a9a697" stroke-width="0.6"/><rect x="6" y="7" width="6" height="5" fill="#cfccbf"/></svg></div>
<div class="btn" style="left:66.0px;top:395.8px;width:18.0px;height:17.5px"><svg width="18" height="18" viewBox="0 0 18 18" style="left:-1px;top:-1px"><path d="M8,2.6 C8.4,4.4 10.5,5.6 10.5,7 A2.5,2.5 0 0 1 5.5,7 C5.5,5.6 7.6,4.4 8,2.6 Z" fill="#1432c8" stroke="#0a1a80" stroke-width="0.6"/><path d="M6.7,6.6 q0.2,-1.1 0.9,-1.6" stroke="#9ab0ff" stroke-width="0.7" fill="none"/></svg></div>
<div class="btn" style="left:89.2px;top:395.8px;width:17.3px;height:17.5px"><svg width="18" height="18" viewBox="0 0 18 18" style="left:-1px;top:-1px"><rect x="4.4" y="4" width="9" height="10" fill="#efede3" stroke="#a9a697" stroke-width="0.9"/><rect x="6.8" y="2.6" width="4.2" height="2.4" fill="#d6d3c6" stroke="#a9a697" stroke-width="0.6"/><path d="M6.4,9.4 L8.2,11.4 L11.4,7" stroke="#a9a697" stroke-width="0.9" fill="none"/></svg></div>
<div class="btn" style="left:107.2px;top:395.8px;width:17.3px;height:17.5px"><svg width="18" height="18" viewBox="0 0 18 18" style="left:-1px;top:-1px"><rect x="3.2" y="2.8" width="8" height="12" fill="#a9a697"/><rect x="11.2" y="3.4" width="3" height="11" fill="#c4c1b3"/><path d="M12.6,4 V14" stroke="#efede3" stroke-width="0.8"/><rect x="4.6" y="4.2" width="3.4" height="1.6" fill="#d4d1c4"/></svg></div>
<div class="btn" style="left:125.2px;top:395.8px;width:17.3px;height:17.5px"><svg width="18" height="18" viewBox="0 0 18 18" style="left:-1px;top:-1px"><path d="M4.6,3.4 L11.2,2.6 L12.8,3.8 V14 L6,14.8 L4.6,13.6 Z" fill="#34c648" stroke="#10401a" stroke-width="0.9"/><path d="M6,4.6 V14.6" stroke="#10401a" stroke-width="0.7"/><path d="M9,5 V12.6" stroke="#0d6a20" stroke-width="0.8" stroke-dasharray="1.4 1"/><path d="M12.8,13.4 L13.8,13.8" stroke="#ddd" stroke-width="0.9"/></svg></div>
<span class="t" style="left:12.6px;top:1.4px;font-size:9.2px;font-weight:bold;color:#fff;transform:scaleX(0.806);text-shadow:0.6px 0.6px 0 #0a2c80">WR-TestWorks</span>
<span class="t" style="left:65.2px;top:-0.4px;font-size:5.5px;font-weight:bold;color:#fff;transform:scaleX(0.800);text-shadow:0.6px 0.6px 0 #0a2c80">™</span>
<span class="t" style="left:72.6px;top:1.4px;font-size:9.2px;font-weight:bold;color:#fff;transform:scaleX(0.833);text-shadow:0.6px 0.6px 0 #0a2c80">- 3QTR2010</span>
<span class="t" style="left:15.9px;top:54.9px;font-size:8.8px;font-weight:bold;color:#fff;transform:scaleX(0.817);text-shadow:0.6px 0.6px 0 #0a2c80">Sweat Response</span>
<span class="t" style="left:2.8px;top:14.7px;font-size:7.8px;color:#000;transform:scaleX(0.731);">File</span>
<span class="t" style="left:18.8px;top:14.7px;font-size:7.8px;color:#000;transform:scaleX(0.781);">Edit</span>
<span class="t" style="left:37.2px;top:14.7px;font-size:7.8px;color:#000;transform:scaleX(0.746);">View</span>
<span class="t" style="left:57.0px;top:14.7px;font-size:7.8px;color:#000;transform:scaleX(0.791);">Patient</span>
<span class="t" style="left:83.8px;top:14.7px;font-size:7.8px;color:#000;transform:scaleX(0.838);">Test</span>
<span class="t" style="left:103.0px;top:14.7px;font-size:7.8px;color:#000;transform:scaleX(0.788);">Device</span>
<span class="t" style="left:128.8px;top:14.7px;font-size:7.8px;color:#000;transform:scaleX(0.790);">Sweat Response</span>
<span class="t" style="left:183.0px;top:14.7px;font-size:7.8px;color:#000;transform:scaleX(0.796);">Utilities</span>
<span class="t" style="left:210.4px;top:14.7px;font-size:7.8px;color:#000;transform:scaleX(0.804);">Window</span>
<span class="t" style="left:239.4px;top:14.7px;font-size:7.8px;color:#000;transform:scaleX(0.760);">Help</span>
<span class="t" style="left:24.7px;top:70.6px;font-size:8px;color:#f2f2f2;transform:scaleX(0.906);">400</span>
<span class="t" style="left:24.7px;top:117.6px;font-size:8px;color:#f2f2f2;transform:scaleX(0.906);">300</span>
<span class="t" style="left:24.7px;top:164.9px;font-size:8px;color:#f2f2f2;transform:scaleX(0.906);">200</span>
<span class="t" style="left:24.7px;top:212.1px;font-size:8px;color:#f2f2f2;transform:scaleX(0.906);">100</span>
<span class="t" style="left:32.8px;top:259.4px;font-size:8px;color:#f2f2f2;transform:scaleX(0.898);">0</span>
<span class="t" style="left:30.5px;top:268.3px;font-size:8px;color:#f2f2f2;transform:scaleX(0.919);">00:00</span>
<span class="t" style="left:67.3px;top:268.3px;font-size:8px;color:#f2f2f2;transform:scaleX(0.919);">01:00</span>
<span class="t" style="left:104.1px;top:268.3px;font-size:8px;color:#f2f2f2;transform:scaleX(0.919);">02:00</span>
<span class="t" style="left:140.9px;top:268.3px;font-size:8px;color:#f2f2f2;transform:scaleX(0.919);">03:00</span>
<span class="t" style="left:177.7px;top:268.3px;font-size:8px;color:#f2f2f2;transform:scaleX(0.919);">04:00</span>
<span class="t" style="left:214.5px;top:268.3px;font-size:8px;color:#f2f2f2;transform:scaleX(0.919);">05:00</span>
<span class="t" style="left:251.3px;top:268.3px;font-size:8px;color:#f2f2f2;transform:scaleX(0.919);">06:00</span>
<span class="t" style="left:288.1px;top:268.3px;font-size:8px;color:#f2f2f2;transform:scaleX(0.919);">07:00</span>
<span class="t" style="left:324.9px;top:268.3px;font-size:8px;color:#f2f2f2;transform:scaleX(0.919);">08:00</span>
<span class="t" style="left:361.7px;top:268.3px;font-size:8px;color:#f2f2f2;transform:scaleX(0.919);">09:00</span>
<span class="t" style="left:398.5px;top:268.3px;font-size:8px;color:#f2f2f2;transform:scaleX(0.919);">10:00</span>
<span class="t" style="left:435.3px;top:268.3px;font-size:8px;color:#f2f2f2;transform:scaleX(0.947);">11:00</span>
<span class="t" style="left:514.2px;top:69.8px;font-size:11px;font-weight:bold;color:#000;transform:scaleX(0.959);-webkit-text-stroke:0.25px #000;">164</span>
<span class="t" style="left:545.8px;top:70.2px;font-size:8.0px;color:#000;transform:scaleX(0.874);">Rate 1</span>
<span class="t" style="left:514.2px;top:82.2px;font-size:11px;font-weight:bold;color:#000;transform:scaleX(0.959);-webkit-text-stroke:0.25px #000;">133</span>
<span class="t" style="left:545.8px;top:82.6px;font-size:8.0px;color:#000;transform:scaleX(0.874);">Rate 2</span>
<span class="t" style="left:514.2px;top:94.6px;font-size:11px;font-weight:bold;color:#000;transform:scaleX(0.959);-webkit-text-stroke:0.25px #000;">207</span>
<span class="t" style="left:545.8px;top:95.0px;font-size:8.0px;color:#000;transform:scaleX(0.874);">Rate 3</span>
<span class="t" style="left:514.2px;top:107.0px;font-size:11px;font-weight:bold;color:#000;transform:scaleX(0.959);-webkit-text-stroke:0.25px #000;">213</span>
<span class="t" style="left:545.8px;top:107.4px;font-size:8.0px;color:#000;transform:scaleX(0.874);">Rate 4</span>
<span class="t" style="left:509.0px;top:281.6px;font-size:8.6px;font-weight:bold;color:#000;transform:scaleX(0.795);">Reset</span>
<span class="t" style="left:533.8px;top:281.8px;font-size:11.3px;font-weight:bold;color:#000;transform:scaleX(1.019);-webkit-text-stroke:0.25px #000;">11:33.11</span>
<span class="t" style="left:102.9px;top:294.9px;font-size:7.2px;color:#000;transform:scaleX(0.843);">FOREARM</span>
<span class="t" style="left:182.0px;top:294.9px;font-size:7.2px;color:#000;transform:scaleX(0.849);">PROX LEG</span>
<span class="t" style="left:263.9px;top:294.9px;font-size:7.2px;color:#000;transform:scaleX(0.867);">DIST LEG</span>
<span class="t" style="left:350.9px;top:294.9px;font-size:7.2px;color:#000;transform:scaleX(0.806);">FOOT</span>
<span class="t" style="left:17.0px;top:308.6px;font-size:7.8px;color:#000;transform:scaleX(0.801);">Baseline Sweat Rate</span>
<span class="t" style="left:17.0px;top:324.2px;font-size:7.8px;color:#000;transform:scaleX(0.786);">Totalized Time (mm:ss)</span>
<span class="t" style="left:17.0px;top:339.7px;font-size:7.8px;color:#000;transform:scaleX(0.821);">Response Latency</span>
<span class="t" style="left:17.0px;top:355.2px;font-size:7.8px;color:#000;transform:scaleX(0.785);">End Offset (from Baseline)</span>
<span class="t" style="left:17.0px;top:370.5px;font-size:7.8px;color:#000;transform:scaleX(0.788);">Total Volume (microliters)</span>
<span class="t" style="left:0.0px;top:0.0px;font-size:8px;color:#fafafa;transform-origin:0 0;transform:translate(11.0px,213.4px) rotate(-90deg) scaleX(0.908);">Sweat Rate(nanoliters/min)</span>
<span class="t" style="left:113.7px;top:310.9px;font-size:8.0px;color:#000;transform:scaleX(0.764);">37</span>
<span class="t" style="left:193.3px;top:310.9px;font-size:8.0px;color:#000;transform:scaleX(0.764);">29</span>
<span class="t" style="left:274.2px;top:310.9px;font-size:8.0px;color:#000;transform:scaleX(0.764);">23</span>
<span class="t" style="left:355.2px;top:310.9px;font-size:8.0px;color:#000;transform:scaleX(0.764);">31</span>
<span class="t" style="left:104.9px;top:326.4px;font-size:8.0px;color:#000;transform:scaleX(0.779);">10:00</span>
<span class="t" style="left:184.5px;top:326.4px;font-size:8.0px;color:#000;transform:scaleX(0.779);">10:00</span>
<span class="t" style="left:265.4px;top:326.4px;font-size:8.0px;color:#000;transform:scaleX(0.779);">10:00</span>
<span class="t" style="left:346.4px;top:326.4px;font-size:8.0px;color:#000;transform:scaleX(0.779);">10:00</span>
<span class="t" style="left:117.6px;top:341.9px;font-size:8.0px;color:#000;transform:scaleX(0.783);">0:58</span>
<span class="t" style="left:197.2px;top:341.9px;font-size:8.0px;color:#000;transform:scaleX(0.783);">1:09</span>
<span class="t" style="left:278.1px;top:341.9px;font-size:8.0px;color:#000;transform:scaleX(0.783);">1:14</span>
<span class="t" style="left:359.1px;top:341.9px;font-size:8.0px;color:#000;transform:scaleX(0.783);">2:20</span>
<span class="t" style="left:119.6px;top:357.4px;font-size:8.0px;color:#000;transform:scaleX(0.764);">135</span>
<span class="t" style="left:199.2px;top:357.4px;font-size:8.0px;color:#000;transform:scaleX(0.764);">105</span>
<span class="t" style="left:280.1px;top:357.4px;font-size:8.0px;color:#000;transform:scaleX(0.764);">180</span>
<span class="t" style="left:361.1px;top:357.4px;font-size:8.0px;color:#000;transform:scaleX(0.764);">192</span>
<span class="t" style="left:114.2px;top:372.7px;font-size:8.0px;color:#000;transform:scaleX(0.779);">1.936</span>
<span class="t" style="left:193.8px;top:372.7px;font-size:8.0px;color:#000;transform:scaleX(0.779);">1.448</span>
<span class="t" style="left:274.7px;top:372.7px;font-size:8.0px;color:#000;transform:scaleX(0.779);">1.519</span>
<span class="t" style="left:355.7px;top:372.7px;font-size:8.0px;color:#000;transform:scaleX(0.779);">1.905</span>
<span class="t" style="left:114.6px;top:36.4px;font-size:4.3px;font-weight:bold;color:#a9a697;transform:scaleX(0.881);">SWEAT</span>
<span class="t" style="left:67.8px;top:402.4px;font-size:4.3px;font-weight:bold;color:#111;transform:scaleX(0.947);">SWEAT</span>
</body></html>
